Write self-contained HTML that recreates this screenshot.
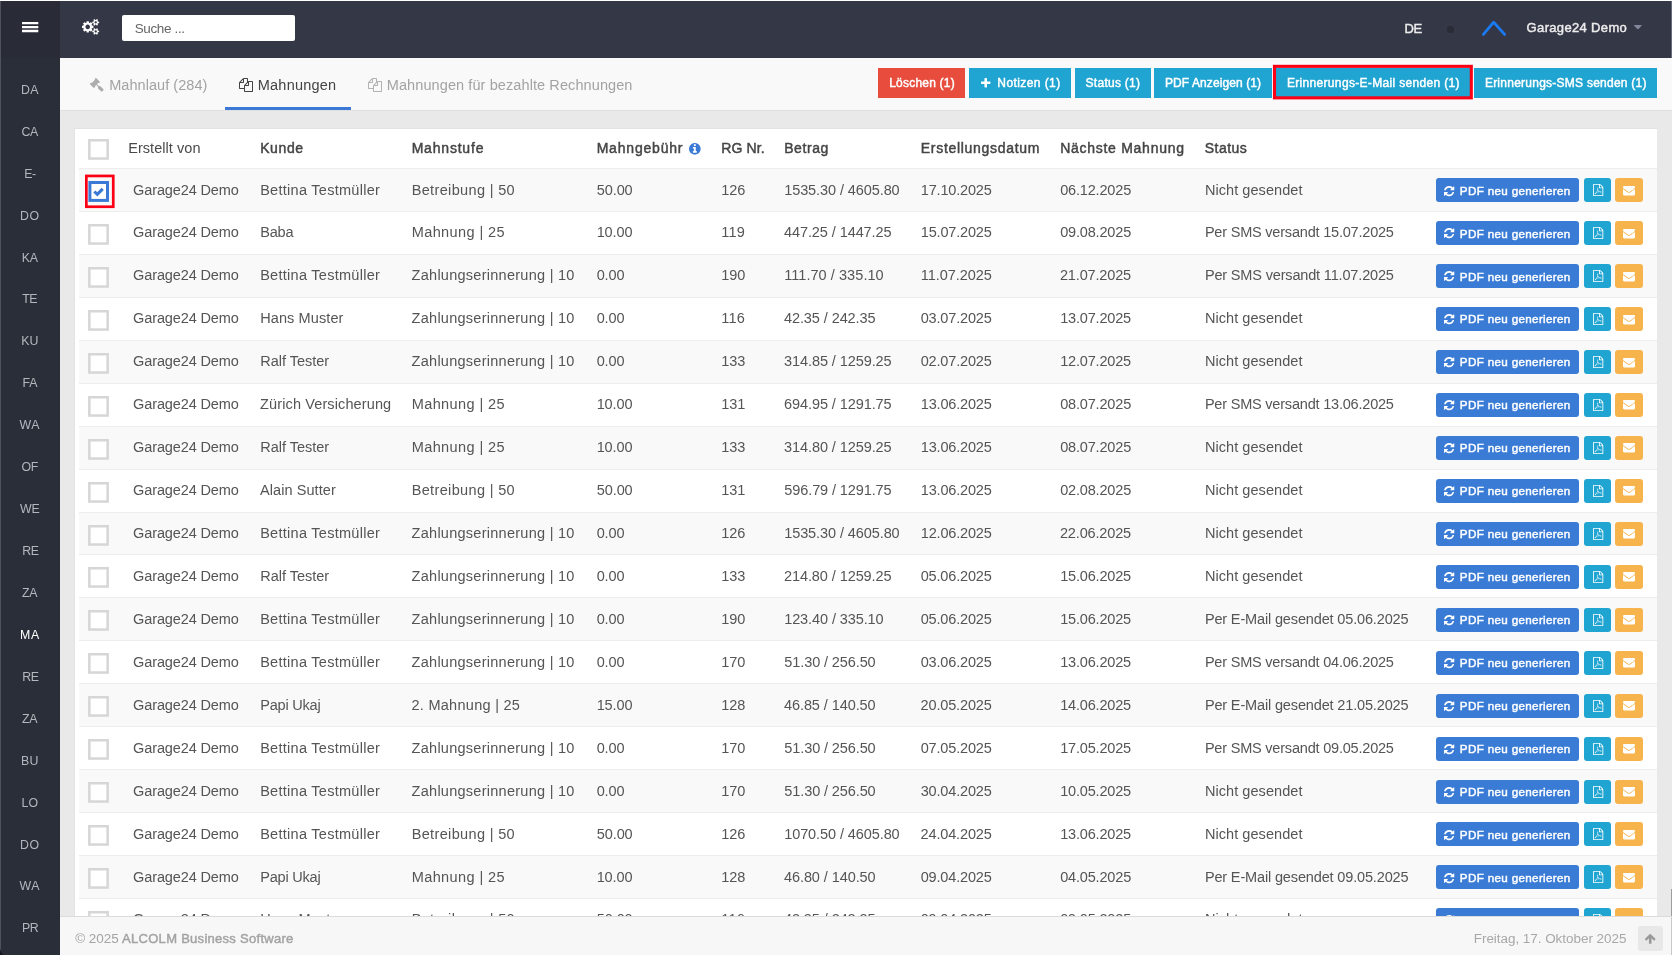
<!DOCTYPE html>
<html lang="de"><head><meta charset="utf-8"><title>Mahnungen</title>
<style>
html,body{margin:0;padding:0}
body{width:1672px;height:955px;overflow:hidden;position:relative;background:#e9e9e9;font-family:"Liberation Sans",sans-serif}
#app{position:absolute;left:0;top:0;width:1672px;height:955px;overflow:hidden;will-change:transform}
.b{position:absolute;box-sizing:content-box}
.t{position:absolute;white-space:pre;line-height:20px}
.i{position:absolute;display:block;overflow:visible}
</style></head><body><div id="app">
<div class="b" style="left:0px;top:0px;width:1672px;height:1px;background:#fff;"></div>
<div class="b" style="left:0px;top:1px;width:1px;height:954px;background:#4f515c;"></div>
<div class="b" style="left:1px;top:1px;width:59px;height:954px;background:#2a2e38;"></div>
<div class="b" style="left:1px;top:1px;width:59px;height:57px;background:#292c36;"></div>
<div class="b" style="left:60px;top:1px;width:1612px;height:57px;background:#343746;"></div>
<div class="b" style="left:1671px;top:1px;width:1px;height:57px;background:#686b7a;"></div>
<svg class="i" style="left:20px;top:20px" width="20" height="14" viewBox="0 0 20 14"><path d="M2 1.9h16.3v2.35H2zM2 5.9h16.3v2.35H2zM2 9.85h16.3v2.35H2z" fill="#fff"/></svg>
<svg class="i" style="left:82.00px;top:19.30px" width="17.14" height="15.72" viewBox="0 -1520 1920 1761"><path fill="#fff" transform="scale(1,-1)" d="M821.0 459.0Q896 534 896.0 640.0Q896 746 821.0 821.0Q746 896 640.0 896.0Q534 896 459.0 821.0Q384 746 384.0 640.0Q384 534 459.0 459.0Q534 384 640.0 384.0Q746 384 821.0 459.0ZM1664 128Q1664 180 1626.0 218.0Q1588 256 1536.0 256.0Q1484 256 1446.0 218.0Q1408 180 1408 128Q1408 75 1445.5 37.5Q1483 0 1536.0 0.0Q1589 0 1626.5 37.5Q1664 75 1664 128ZM1664 1152Q1664 1204 1626.0 1242.0Q1588 1280 1536.0 1280.0Q1484 1280 1446.0 1242.0Q1408 1204 1408 1152Q1408 1099 1445.5 1061.5Q1483 1024 1536.0 1024.0Q1589 1024 1626.5 1061.5Q1664 1099 1664 1152ZM1280 731V546Q1280 536 1273.0 526.5Q1266 517 1257 516L1102 492Q1091 457 1070 416Q1104 368 1160 301Q1167 290 1167 281Q1167 269 1160 262Q1137 232 1077.5 172.5Q1018 113 999 113Q988 113 978 120L863 210Q826 191 786 179Q775 71 763 24Q756 0 733 0H547Q536 0 527.0 7.5Q518 15 517 25L494 178Q460 188 419 209L301 120Q294 113 281 113Q270 113 260 121Q116 254 116 281Q116 290 123 300Q133 314 164.0 353.0Q195 392 211 414Q188 458 176 496L24 520Q14 521 7.0 529.5Q0 538 0 549V734Q0 744 7.0 753.5Q14 763 23 764L178 788Q189 823 210 864Q176 912 120 979Q113 990 113 999Q113 1011 120 1019Q142 1049 202.0 1108.0Q262 1167 281 1167Q292 1167 302 1160L417 1070Q451 1088 494 1102Q505 1210 517 1256Q524 1280 547 1280H733Q744 1280 753.0 1272.5Q762 1265 763 1255L786 1102Q820 1092 861 1071L979 1160Q987 1167 999 1167Q1010 1167 1020 1159Q1164 1026 1164 999Q1164 991 1157 980Q1145 964 1115.0 926.0Q1085 888 1070 866Q1093 818 1104 784L1256 761Q1266 759 1273.0 750.5Q1280 742 1280 731ZM1920 198V58Q1920 42 1771 27Q1759 0 1741 -25Q1792 -138 1792 -163Q1792 -167 1788 -170Q1666 -241 1664 -241Q1656 -241 1618.0 -194.0Q1580 -147 1566 -126Q1546 -128 1536.0 -128.0Q1526 -128 1506 -126Q1492 -147 1454.0 -194.0Q1416 -241 1408 -241Q1406 -241 1284 -170Q1280 -167 1280 -163Q1280 -138 1331 -25Q1313 0 1301 27Q1152 42 1152 58V198Q1152 214 1301 229Q1314 258 1331 281Q1280 394 1280 419Q1280 423 1284 426Q1288 428 1319.0 446.0Q1350 464 1378.0 480.0Q1406 496 1408 496Q1416 496 1454.0 449.5Q1492 403 1506 382Q1526 384 1536.0 384.0Q1546 384 1566 382Q1617 453 1658 494L1664 496Q1668 496 1788 426Q1792 423 1792 419Q1792 394 1741 281Q1758 258 1771 229Q1920 214 1920 198ZM1920 1222V1082Q1920 1066 1771 1051Q1759 1024 1741 999Q1792 886 1792 861Q1792 857 1788 854Q1666 783 1664 783Q1656 783 1618.0 830.0Q1580 877 1566 898Q1546 896 1536.0 896.0Q1526 896 1506 898Q1492 877 1454.0 830.0Q1416 783 1408 783Q1406 783 1284 854Q1280 857 1280 861Q1280 886 1331 999Q1313 1024 1301 1051Q1152 1066 1152 1082V1222Q1152 1238 1301 1253Q1314 1282 1331 1305Q1280 1418 1280 1443Q1280 1447 1284 1450Q1288 1452 1319.0 1470.0Q1350 1488 1378.0 1504.0Q1406 1520 1408 1520Q1416 1520 1454.0 1473.5Q1492 1427 1506 1406Q1526 1408 1536.0 1408.0Q1546 1408 1566 1406Q1617 1477 1658 1518L1664 1520Q1668 1520 1788 1450Q1792 1447 1792 1443Q1792 1418 1741 1305Q1758 1282 1771 1253Q1920 1238 1920 1222Z"/></svg>
<div class="b" style="left:122px;top:15px;width:173px;height:26px;background:#fff;border-radius:2px;"></div>
<span class="t " style="left:134.66px;top:19.00px;font-size:13.49px;color:#666;letter-spacing:-0.349px;">Suche ...</span>
<span class="t " style="left:1404.46px;top:19.00px;font-size:13.0px;color:#ececec;letter-spacing:-0.450px;-webkit-text-stroke:0.45px #ececec;">DE</span>
<div class="b" style="left:1446.7px;top:25.5px;width:7px;height:7px;border-radius:50%;background:#292b36"></div>
<svg class="i" style="left:1478px;top:17px" width="32" height="22" viewBox="0 0 32 22"><path d="M5.4 17.4 L15.7 5.2 L26.6 17.4" fill="none" stroke="#1a7af3" stroke-width="2.8" stroke-linecap="round" stroke-linejoin="round"/></svg>
<span class="t " style="left:1526.61px;top:18.00px;font-size:13.0px;color:#ececec;letter-spacing:0.340px;-webkit-text-stroke:0.45px #ececec;">Garage24 Demo</span>
<svg class="i" style="left:1634.00px;top:25.00px" width="7.77" height="4.37" viewBox="0.0 -896 1024.0 576.0"><path fill="#83869a" transform="scale(1,-1)" d="M1005 787 557 339Q538 320 512.0 320.0Q486 320 467 339L19 787Q0 806 0.0 832.0Q0 858 19.0 877.0Q38 896 64 896H960Q986 896 1005.0 877.0Q1024 858 1024.0 832.0Q1024 806 1005 787Z"/></svg>
<span class="t " style="left:21.03px;top:80.00px;font-size:12.35px;color:#b4b7be;letter-spacing:0.250px;">DA</span>
<span class="t " style="left:21.56px;top:122.00px;font-size:12.35px;color:#b4b7be;letter-spacing:-0.367px;">CA</span>
<span class="t " style="left:24.15px;top:164.00px;font-size:12.35px;color:#b4b7be;letter-spacing:-0.450px;">E-</span>
<span class="t " style="left:20.09px;top:206.00px;font-size:12.35px;color:#b4b7be;letter-spacing:0.516px;">DO</span>
<span class="t " style="left:21.77px;top:248.00px;font-size:12.35px;color:#b4b7be;letter-spacing:-0.141px;">KA</span>
<span class="t " style="left:22.24px;top:289.00px;font-size:12.35px;color:#b4b7be;letter-spacing:-0.450px;">TE</span>
<span class="t " style="left:21.14px;top:331.00px;font-size:12.35px;color:#b4b7be;letter-spacing:0.141px;">KU</span>
<span class="t " style="left:22.39px;top:373.00px;font-size:12.35px;color:#b4b7be;letter-spacing:-0.078px;">FA</span>
<span class="t " style="left:19.60px;top:415.00px;font-size:12.35px;color:#b4b7be;letter-spacing:0.398px;">WA</span>
<span class="t " style="left:21.39px;top:457.00px;font-size:12.35px;color:#b4b7be;letter-spacing:-0.164px;">OF</span>
<span class="t " style="left:20.10px;top:499.00px;font-size:12.35px;color:#b4b7be;letter-spacing:-0.328px;">WE</span>
<span class="t " style="left:22.24px;top:541.00px;font-size:12.35px;color:#b4b7be;letter-spacing:-0.450px;">RE</span>
<span class="t " style="left:21.89px;top:583.00px;font-size:12.35px;color:#b4b7be;letter-spacing:-0.055px;">ZA</span>
<span class="t " style="left:19.90px;top:625.00px;font-size:12.35px;color:#fff;letter-spacing:0.703px;">MA</span>
<span class="t " style="left:22.24px;top:667.00px;font-size:12.35px;color:#b4b7be;letter-spacing:-0.450px;">RE</span>
<span class="t " style="left:21.89px;top:709.00px;font-size:12.35px;color:#b4b7be;letter-spacing:-0.055px;">ZA</span>
<span class="t " style="left:20.93px;top:751.00px;font-size:12.35px;color:#b4b7be;letter-spacing:0.359px;">BU</span>
<span class="t " style="left:21.41px;top:793.00px;font-size:12.35px;color:#b4b7be;letter-spacing:0.219px;">LO</span>
<span class="t " style="left:20.09px;top:835.00px;font-size:12.35px;color:#b4b7be;letter-spacing:0.516px;">DO</span>
<span class="t " style="left:19.60px;top:876.00px;font-size:12.35px;color:#b4b7be;letter-spacing:0.398px;">WA</span>
<span class="t " style="left:21.94px;top:918.00px;font-size:12.35px;color:#b4b7be;letter-spacing:-0.450px;">PR</span>
<div class="b" style="left:60px;top:58px;width:1612px;height:52px;background:#f9f9f9;"></div>
<div class="b" style="left:60px;top:110px;width:1612px;height:1px;background:#e0e0e0;"></div>
<svg class="i" style="left:90.30px;top:78.00px" width="13.52" height="13.52" viewBox="40 -1496 1731 1731"><path fill="#adadad" transform="scale(1,-1)" d="M1771 0Q1771 -53 1734 -90L1627 -198Q1588 -235 1536 -235Q1483 -235 1446 -198L1083 166Q1045 202 1045 256Q1045 309 1088 352L832 608L706 482Q692 468 672.0 468.0Q652 468 638 482Q640 480 650.5 470.0Q661 460 663.0 457.0Q665 454 673.0 445.5Q681 437 683.0 432.0Q685 427 689.0 418.5Q693 410 694.5 402.0Q696 394 696 384Q696 346 668 316Q665 313 651.5 298.0Q638 283 632.5 277.5Q627 272 614.0 261.0Q601 250 592.0 245.5Q583 241 570.0 236.5Q557 232 544 232Q504 232 476 260L68 668Q40 696 40 736Q40 749 44.5 762.0Q49 775 53.5 784.0Q58 793 69.0 806.0Q80 819 85.5 824.5Q91 830 106.0 843.5Q121 857 124 860Q154 888 192 888Q202 888 210.0 886.5Q218 885 226.5 881.0Q235 877 240.0 875.0Q245 873 253.5 865.0Q262 857 265.0 855.0Q268 853 278.0 842.5Q288 832 290 830Q276 844 276.0 864.0Q276 884 290 898L638 1246Q652 1260 672.0 1260.0Q692 1260 706 1246Q704 1248 693.5 1258.0Q683 1268 681.0 1271.0Q679 1274 671.0 1282.5Q663 1291 661.0 1296.0Q659 1301 655.0 1309.5Q651 1318 649.5 1326.0Q648 1334 648 1344Q648 1382 676 1412Q679 1415 692.5 1430.0Q706 1445 711.5 1450.5Q717 1456 730.0 1467.0Q743 1478 752.0 1482.5Q761 1487 774.0 1491.5Q787 1496 800 1496Q840 1496 868 1468L1276 1060Q1304 1032 1304 992Q1304 979 1299.5 966.0Q1295 953 1290.5 944.0Q1286 935 1275.0 922.0Q1264 909 1258.5 903.5Q1253 898 1238.0 884.5Q1223 871 1220 868Q1190 840 1152 840Q1142 840 1134.0 841.5Q1126 843 1117.5 847.0Q1109 851 1104.0 853.0Q1099 855 1090.5 863.0Q1082 871 1079.0 873.0Q1076 875 1066.0 885.5Q1056 896 1054 898Q1068 884 1068.0 864.0Q1068 844 1054 830L928 704L1184 448Q1227 491 1280 491Q1332 491 1371 454L1734 91Q1771 52 1771 0Z"/></svg>
<span class="t " style="left:109.18px;top:75.00px;font-size:14.53px;color:#a3a3a3;letter-spacing:0.045px;">Mahnlauf (284)</span>
<div class="b" style="left:225px;top:107px;width:125.5px;height:3px;background:#3a79d5;"></div>
<svg class="i" style="left:239.00px;top:77.60px" width="14.00" height="14.00" viewBox="0 -1536 1792 1792"><path fill="#444" transform="scale(1,-1)" d="M1696 1152Q1736 1152 1764.0 1124.0Q1792 1096 1792 1056V-160Q1792 -200 1764.0 -228.0Q1736 -256 1696 -256H736Q696 -256 668.0 -228.0Q640 -200 640 -160V128H96Q56 128 28.0 156.0Q0 184 0 224V896Q0 936 20.0 984.0Q40 1032 68 1060L476 1468Q504 1496 552.0 1516.0Q600 1536 640 1536H1056Q1096 1536 1124.0 1508.0Q1152 1480 1152 1440V1112Q1220 1152 1280 1152ZM1152 939 853 640H1152ZM512 1323 213 1024H512ZM708 676 1024 992V1408H640V992Q640 952 612.0 924.0Q584 896 544 896H128V256H640V512Q640 552 660.0 600.0Q680 648 708 676ZM1664 -128V1024H1280V608Q1280 568 1252.0 540.0Q1224 512 1184 512H768V-128Z"/></svg>
<span class="t " style="left:257.78px;top:75.00px;font-size:14.53px;color:#444;letter-spacing:0.214px;">Mahnungen</span>
<svg class="i" style="left:368.00px;top:77.60px" width="14.00" height="14.00" viewBox="0 -1536 1792 1792"><path fill="#b2b2b2" transform="scale(1,-1)" d="M1696 1152Q1736 1152 1764.0 1124.0Q1792 1096 1792 1056V-160Q1792 -200 1764.0 -228.0Q1736 -256 1696 -256H736Q696 -256 668.0 -228.0Q640 -200 640 -160V128H96Q56 128 28.0 156.0Q0 184 0 224V896Q0 936 20.0 984.0Q40 1032 68 1060L476 1468Q504 1496 552.0 1516.0Q600 1536 640 1536H1056Q1096 1536 1124.0 1508.0Q1152 1480 1152 1440V1112Q1220 1152 1280 1152ZM1152 939 853 640H1152ZM512 1323 213 1024H512ZM708 676 1024 992V1408H640V992Q640 952 612.0 924.0Q584 896 544 896H128V256H640V512Q640 552 660.0 600.0Q680 648 708 676ZM1664 -128V1024H1280V608Q1280 568 1252.0 540.0Q1224 512 1184 512H768V-128Z"/></svg>
<span class="t " style="left:386.78px;top:75.00px;font-size:14.53px;color:#a3a3a3;letter-spacing:0.086px;">Mahnungen für bezahlte Rechnungen</span>
<div class="b" style="left:878.25px;top:68px;width:87.0px;height:30px;background:#e74c3c;"></div>
<span class="t " style="left:889.20px;top:73.00px;font-size:12.0px;color:#fff;letter-spacing:0.213px;-webkit-text-stroke:0.45px #fff;">Löschen (1)</span>
<div class="b" style="left:969px;top:68px;width:102.25px;height:30px;background:#20a4d1;"></div>
<div class="b" style="left:1074.5px;top:68px;width:76.25px;height:30px;background:#20a4d1;"></div>
<span class="t " style="left:1085.61px;top:73.00px;font-size:12.0px;color:#fff;letter-spacing:0.256px;-webkit-text-stroke:0.45px #fff;">Status (1)</span>
<div class="b" style="left:1154px;top:68px;width:117.59999999999991px;height:30px;background:#20a4d1;"></div>
<span class="t " style="left:1164.94px;top:73.00px;font-size:12.0px;color:#fff;letter-spacing:0.094px;-webkit-text-stroke:0.45px #fff;">PDF Anzeigen (1)</span>
<div class="b" style="left:1276px;top:68px;width:194px;height:30px;background:#20a4d1;"></div>
<span class="t " style="left:1286.88px;top:73.00px;font-size:12.0px;color:#fff;letter-spacing:0.330px;-webkit-text-stroke:0.45px #fff;">Erinnerungs-E-Mail senden (1)</span>
<svg class="i" style="left:1270px;top:62px" width="206" height="40" viewBox="0 0 206 40"><rect x="4.5" y="4.35" width="196.8" height="31.5" fill="none" stroke="#fb0014" stroke-width="3.1"/></svg>
<div class="b" style="left:1474px;top:68px;width:183px;height:30px;background:#20a4d1;"></div>
<span class="t " style="left:1484.89px;top:73.00px;font-size:12.0px;color:#fff;letter-spacing:0.248px;-webkit-text-stroke:0.45px #fff;">Erinnerungs-SMS senden (1)</span>
<svg class="i" style="left:980.60px;top:78.20px" width="9.43" height="9.43" viewBox="0 -1408 1408 1408"><path fill="#fff" transform="scale(1,-1)" d="M1408 800V608Q1408 568 1380.0 540.0Q1352 512 1312 512H896V96Q896 56 868.0 28.0Q840 0 800 0H608Q568 0 540.0 28.0Q512 56 512 96V512H96Q56 512 28.0 540.0Q0 568 0 608V800Q0 840 28.0 868.0Q56 896 96 896H512V1312Q512 1352 540.0 1380.0Q568 1408 608 1408H800Q840 1408 868.0 1380.0Q896 1352 896 1312V896H1312Q1352 896 1380.0 868.0Q1408 840 1408 800Z"/></svg>
<span class="t " style="left:997.35px;top:73.00px;font-size:12.0px;color:#fff;letter-spacing:0.412px;-webkit-text-stroke:0.45px #fff;">Notizen (1)</span>
<div class="b" style="left:75px;top:129px;width:1582px;height:800px;background:#fff;box-shadow:0 0 0 1px #e3e3e3;"></div>
<svg class="i" style="left:88px;top:139px" width="22" height="22" viewBox="0 0 22 22"><rect x="1.35" y="1.25" width="18.3" height="18.3" fill="#fff" stroke="#d6d6d6" stroke-width="2.5"/></svg>
<span class="t " style="left:128.18px;top:138.00px;font-size:14.53px;color:#4a4a4a;letter-spacing:0.050px;">Erstellt von</span>
<span class="t " style="left:260.17px;top:138.00px;font-size:14.0px;color:#444;letter-spacing:0.606px;-webkit-text-stroke:0.45px #444;">Kunde</span>
<span class="t " style="left:411.67px;top:138.00px;font-size:14.0px;color:#444;letter-spacing:0.800px;-webkit-text-stroke:0.45px #444;">Mahnstufe</span>
<span class="t " style="left:596.67px;top:138.00px;font-size:14.0px;color:#444;letter-spacing:0.800px;-webkit-text-stroke:0.45px #444;">Mahngebühr</span>
<svg class="i" style="left:689.00px;top:143.00px" width="11.66" height="11.66" viewBox="0.0 -1408.0 1536.0 1536.0"><path fill="#3a79d5" transform="scale(1,-1)" d="M1024 160V320Q1024 334 1015.0 343.0Q1006 352 992 352H896V864Q896 878 887.0 887.0Q878 896 864 896H544Q530 896 521.0 887.0Q512 878 512 864V704Q512 690 521.0 681.0Q530 672 544 672H640V352H544Q530 352 521.0 343.0Q512 334 512 320V160Q512 146 521.0 137.0Q530 128 544 128H992Q1006 128 1015.0 137.0Q1024 146 1024 160ZM896 1056V1216Q896 1230 887.0 1239.0Q878 1248 864 1248H672Q658 1248 649.0 1239.0Q640 1230 640 1216V1056Q640 1042 649.0 1033.0Q658 1024 672 1024H864Q878 1024 887.0 1033.0Q896 1042 896 1056ZM1433.0 1025.5Q1536 849 1536.0 640.0Q1536 431 1433.0 254.5Q1330 78 1153.5 -25.0Q977 -128 768.0 -128.0Q559 -128 382.5 -25.0Q206 78 103.0 254.5Q0 431 0.0 640.0Q0 849 103.0 1025.5Q206 1202 382.5 1305.0Q559 1408 768.0 1408.0Q977 1408 1153.5 1305.0Q1330 1202 1433.0 1025.5Z"/></svg>
<span class="t " style="left:721.17px;top:138.00px;font-size:14.0px;color:#444;letter-spacing:0.135px;-webkit-text-stroke:0.45px #444;">RG Nr.</span>
<span class="t " style="left:784.17px;top:138.00px;font-size:14.0px;color:#444;letter-spacing:0.586px;-webkit-text-stroke:0.45px #444;">Betrag</span>
<span class="t " style="left:920.77px;top:138.00px;font-size:14.0px;color:#444;letter-spacing:0.704px;-webkit-text-stroke:0.45px #444;">Erstellungsdatum</span>
<span class="t " style="left:1060.17px;top:138.00px;font-size:14.0px;color:#444;letter-spacing:0.727px;-webkit-text-stroke:0.45px #444;">Nächste Mahnung</span>
<span class="t " style="left:1204.75px;top:138.00px;font-size:14.0px;color:#444;letter-spacing:0.484px;-webkit-text-stroke:0.45px #444;">Status</span>
<div class="b" style="left:79px;top:168.00px;width:1578px;height:43.5375px;background:#f9f9f9;"></div>
<div class="b" style="left:79px;top:168.00px;width:1578px;height:1px;background:#ededed;"></div>
<svg class="i" style="left:84px;top:173px" width="33" height="37" viewBox="0 0 33 37"><rect x="2.35" y="2.95" width="26.9" height="30.8" fill="none" stroke="#fb0014" stroke-width="2.7"/></svg>
<svg class="i" style="left:88px;top:181px" width="22" height="22" viewBox="0 0 22 22"><rect x="1.9" y="1.5" width="17.6" height="17.9" fill="#fff" stroke="#3a79d5" stroke-width="3"/><path d="M6.3 10.5 L9.3 13.4 L14.7 7.8" fill="none" stroke="#3a79d5" stroke-width="3.1"/></svg>
<span class="t " style="left:133.12px;top:180.00px;font-size:14.53px;color:#555;letter-spacing:-0.137px;">Garage24 Demo</span>
<span class="t " style="left:260.18px;top:180.00px;font-size:14.53px;color:#555;letter-spacing:0.271px;">Bettina Testmüller</span>
<span class="t " style="left:411.68px;top:180.00px;font-size:14.53px;color:#555;letter-spacing:0.344px;">Betreibung | 50</span>
<span class="t " style="left:596.83px;top:180.00px;font-size:14.53px;color:#555;letter-spacing:-0.125px;">50.00</span>
<span class="t " style="left:721.18px;top:180.00px;font-size:14.53px;color:#555;letter-spacing:-0.068px;">126</span>
<span class="t " style="left:784.18px;top:180.00px;font-size:14.53px;color:#555;letter-spacing:-0.095px;">1535.30 / 4605.80</span>
<span class="t " style="left:920.78px;top:180.00px;font-size:14.53px;color:#555;letter-spacing:-0.181px;">17.10.2025</span>
<span class="t " style="left:1060.13px;top:180.00px;font-size:14.53px;color:#555;letter-spacing:-0.175px;">06.12.2025</span>
<span class="t " style="left:1204.88px;top:180.00px;font-size:14.53px;color:#555;letter-spacing:0.061px;">Nicht gesendet</span>
<div class="b" style="left:1436px;top:178.40px;width:143px;height:24px;border-radius:3px;background:#3a7bd5"></div>
<svg class="i" style="left:1444.20px;top:185.50px" width="10.29" height="10.29" viewBox="0 -1408 1536 1536"><path fill="#fff" transform="scale(1,-1)" d="M1511 480Q1511 475 1510 473Q1446 205 1242.0 38.5Q1038 -128 764 -128Q618 -128 481.5 -73.0Q345 -18 238 84L109 -45Q90 -64 64.0 -64.0Q38 -64 19.0 -45.0Q0 -26 0 0V448Q0 474 19.0 493.0Q38 512 64 512H512Q538 512 557.0 493.0Q576 474 576.0 448.0Q576 422 557 403L420 266Q491 200 581.0 164.0Q671 128 768 128Q902 128 1018.0 193.0Q1134 258 1204 372Q1215 389 1257 489Q1265 512 1287 512H1479Q1492 512 1501.5 502.5Q1511 493 1511 480ZM1536 1280V832Q1536 806 1517.0 787.0Q1498 768 1472 768H1024Q998 768 979.0 787.0Q960 806 960.0 832.0Q960 858 979 877L1117 1015Q969 1152 768 1152Q634 1152 518.0 1087.0Q402 1022 332 908Q321 891 279 791Q271 768 249 768H50Q37 768 27.5 777.5Q18 787 18 800V807Q83 1075 288.0 1241.5Q493 1408 768 1408Q914 1408 1052.0 1352.5Q1190 1297 1297 1196L1427 1325Q1446 1344 1472.0 1344.0Q1498 1344 1517.0 1325.0Q1536 1306 1536 1280Z"/></svg>
<span class="t " style="left:1459.84px;top:181.00px;font-size:11.65px;color:#fff;letter-spacing:0.333px;-webkit-text-stroke:0.45px #fff;">PDF neu generieren</span>
<div class="b" style="left:1584px;top:178.40px;width:27px;height:24px;border-radius:3px;background:#20a4d1"></div>
<svg class="i" style="left:1592.90px;top:184.40px" width="10.29" height="12.00" viewBox="0 -1536 1536 1792"><path fill="#fff" transform="scale(1,-1)" d="M1468 1156Q1496 1128 1516.0 1080.0Q1536 1032 1536 992V-160Q1536 -200 1508.0 -228.0Q1480 -256 1440 -256H96Q56 -256 28.0 -228.0Q0 -200 0 -160V1440Q0 1480 28.0 1508.0Q56 1536 96 1536H992Q1032 1536 1080.0 1516.0Q1128 1496 1156 1468ZM1024 1400V1024H1400Q1390 1053 1378 1065L1065 1378Q1053 1390 1024 1400ZM1408 -128V896H992Q952 896 924.0 924.0Q896 952 896 992V1408H128V-128ZM894 465Q927 439 978 409Q1037 416 1095 416Q1242 416 1272 367Q1288 345 1274 315Q1274 314 1273.0 313.0Q1272 312 1271 311V310Q1265 272 1200 272Q1152 272 1085.0 292.0Q1018 312 955 345Q734 321 563 262Q410 0 321 0Q306 0 293 7L269 19Q268 20 263 24Q253 34 257 60Q266 100 313.0 151.5Q360 203 445 248Q459 257 468 242Q470 240 470 238Q522 323 577 435Q645 571 681 697Q657 779 650.5 856.5Q644 934 657 984Q668 1024 699 1024H720H721Q744 1024 756 1009Q774 988 765 941Q763 935 761 933Q762 930 762 925V895Q760 772 748 703Q803 539 894 465ZM318 54Q370 78 455 212Q404 172 367.5 128.0Q331 84 318 54ZM716 974Q701 932 714 842Q715 849 721 886Q721 889 728 929Q729 933 732 937Q731 938 731 939Q730 941 730 942Q729 964 717 978Q717 977 716 976ZM592 313Q727 367 876 394Q874 395 863.0 403.5Q852 412 847 417Q771 484 720 593Q693 507 637 396Q607 340 592 313ZM1238 329Q1214 353 1098 353Q1174 325 1222 325Q1236 325 1240 326Q1240 327 1238 329Z"/></svg>
<div class="b" style="left:1614.8px;top:178.40px;width:28.2px;height:24px;border-radius:3px;background:#f8b44c"></div>
<svg class="i" style="left:1622.90px;top:185.80px" width="12.00" height="9.43" viewBox="0 -1280 1792 1408"><path fill="#fff" transform="scale(1,-1)" d="M1792 826V32Q1792 -34 1745.0 -81.0Q1698 -128 1632 -128H160Q94 -128 47.0 -81.0Q0 -34 0 32V826Q44 777 101 739Q463 493 598 394Q655 352 690.5 328.5Q726 305 785.0 280.5Q844 256 895 256H896H897Q948 256 1007.0 280.5Q1066 305 1101.5 328.5Q1137 352 1194 394Q1364 517 1692 739Q1749 778 1792 826ZM1792 1120Q1792 1041 1743.0 969.0Q1694 897 1621 846Q1245 585 1153 521Q1143 514 1110.5 490.5Q1078 467 1056.5 452.5Q1035 438 1004.5 420.0Q974 402 947.0 393.0Q920 384 897 384H896H895Q872 384 845.0 393.0Q818 402 787.5 420.0Q757 438 735.5 452.5Q714 467 681.5 490.5Q649 514 639 521Q548 585 377.0 703.5Q206 822 172 846Q110 888 55.0 961.5Q0 1035 0 1098Q0 1176 41.5 1228.0Q83 1280 160 1280H1632Q1697 1280 1744.5 1233.0Q1792 1186 1792 1120Z"/></svg>
<div class="b" style="left:79px;top:210.94px;width:1578px;height:1px;background:#ededed;"></div>
<svg class="i" style="left:88px;top:223.94px" width="22" height="22" viewBox="0 0 22 22"><rect x="1.35" y="1.25" width="18.3" height="18.3" fill="#fff" stroke="#d6d6d6" stroke-width="2.5"/></svg>
<span class="t " style="left:133.12px;top:222.00px;font-size:14.53px;color:#555;letter-spacing:-0.137px;">Garage24 Demo</span>
<span class="t " style="left:260.18px;top:222.00px;font-size:14.53px;color:#555;letter-spacing:-0.184px;">Baba</span>
<span class="t " style="left:411.68px;top:222.00px;font-size:14.53px;color:#555;letter-spacing:0.400px;">Mahnung | 25</span>
<span class="t " style="left:596.68px;top:222.00px;font-size:14.53px;color:#555;letter-spacing:-0.125px;">10.00</span>
<span class="t " style="left:721.18px;top:222.00px;font-size:14.53px;color:#555;letter-spacing:0.292px;">119</span>
<span class="t " style="left:783.96px;top:222.00px;font-size:14.53px;color:#555;letter-spacing:-0.087px;">447.25 / 1447.25</span>
<span class="t " style="left:920.78px;top:222.00px;font-size:14.53px;color:#555;letter-spacing:-0.181px;">15.07.2025</span>
<span class="t " style="left:1060.13px;top:222.00px;font-size:14.53px;color:#555;letter-spacing:-0.175px;">09.08.2025</span>
<span class="t " style="left:1204.88px;top:222.00px;font-size:14.53px;color:#555;letter-spacing:-0.208px;">Per SMS versandt 15.07.2025</span>
<div class="b" style="left:1436px;top:221.34px;width:143px;height:24px;border-radius:3px;background:#3a7bd5"></div>
<svg class="i" style="left:1444.20px;top:228.44px" width="10.29" height="10.29" viewBox="0 -1408 1536 1536"><path fill="#fff" transform="scale(1,-1)" d="M1511 480Q1511 475 1510 473Q1446 205 1242.0 38.5Q1038 -128 764 -128Q618 -128 481.5 -73.0Q345 -18 238 84L109 -45Q90 -64 64.0 -64.0Q38 -64 19.0 -45.0Q0 -26 0 0V448Q0 474 19.0 493.0Q38 512 64 512H512Q538 512 557.0 493.0Q576 474 576.0 448.0Q576 422 557 403L420 266Q491 200 581.0 164.0Q671 128 768 128Q902 128 1018.0 193.0Q1134 258 1204 372Q1215 389 1257 489Q1265 512 1287 512H1479Q1492 512 1501.5 502.5Q1511 493 1511 480ZM1536 1280V832Q1536 806 1517.0 787.0Q1498 768 1472 768H1024Q998 768 979.0 787.0Q960 806 960.0 832.0Q960 858 979 877L1117 1015Q969 1152 768 1152Q634 1152 518.0 1087.0Q402 1022 332 908Q321 891 279 791Q271 768 249 768H50Q37 768 27.5 777.5Q18 787 18 800V807Q83 1075 288.0 1241.5Q493 1408 768 1408Q914 1408 1052.0 1352.5Q1190 1297 1297 1196L1427 1325Q1446 1344 1472.0 1344.0Q1498 1344 1517.0 1325.0Q1536 1306 1536 1280Z"/></svg>
<span class="t " style="left:1459.84px;top:224.00px;font-size:11.65px;color:#fff;letter-spacing:0.333px;-webkit-text-stroke:0.45px #fff;">PDF neu generieren</span>
<div class="b" style="left:1584px;top:221.34px;width:27px;height:24px;border-radius:3px;background:#20a4d1"></div>
<svg class="i" style="left:1592.90px;top:227.34px" width="10.29" height="12.00" viewBox="0 -1536 1536 1792"><path fill="#fff" transform="scale(1,-1)" d="M1468 1156Q1496 1128 1516.0 1080.0Q1536 1032 1536 992V-160Q1536 -200 1508.0 -228.0Q1480 -256 1440 -256H96Q56 -256 28.0 -228.0Q0 -200 0 -160V1440Q0 1480 28.0 1508.0Q56 1536 96 1536H992Q1032 1536 1080.0 1516.0Q1128 1496 1156 1468ZM1024 1400V1024H1400Q1390 1053 1378 1065L1065 1378Q1053 1390 1024 1400ZM1408 -128V896H992Q952 896 924.0 924.0Q896 952 896 992V1408H128V-128ZM894 465Q927 439 978 409Q1037 416 1095 416Q1242 416 1272 367Q1288 345 1274 315Q1274 314 1273.0 313.0Q1272 312 1271 311V310Q1265 272 1200 272Q1152 272 1085.0 292.0Q1018 312 955 345Q734 321 563 262Q410 0 321 0Q306 0 293 7L269 19Q268 20 263 24Q253 34 257 60Q266 100 313.0 151.5Q360 203 445 248Q459 257 468 242Q470 240 470 238Q522 323 577 435Q645 571 681 697Q657 779 650.5 856.5Q644 934 657 984Q668 1024 699 1024H720H721Q744 1024 756 1009Q774 988 765 941Q763 935 761 933Q762 930 762 925V895Q760 772 748 703Q803 539 894 465ZM318 54Q370 78 455 212Q404 172 367.5 128.0Q331 84 318 54ZM716 974Q701 932 714 842Q715 849 721 886Q721 889 728 929Q729 933 732 937Q731 938 731 939Q730 941 730 942Q729 964 717 978Q717 977 716 976ZM592 313Q727 367 876 394Q874 395 863.0 403.5Q852 412 847 417Q771 484 720 593Q693 507 637 396Q607 340 592 313ZM1238 329Q1214 353 1098 353Q1174 325 1222 325Q1236 325 1240 326Q1240 327 1238 329Z"/></svg>
<div class="b" style="left:1614.8px;top:221.34px;width:28.2px;height:24px;border-radius:3px;background:#f8b44c"></div>
<svg class="i" style="left:1622.90px;top:228.74px" width="12.00" height="9.43" viewBox="0 -1280 1792 1408"><path fill="#fff" transform="scale(1,-1)" d="M1792 826V32Q1792 -34 1745.0 -81.0Q1698 -128 1632 -128H160Q94 -128 47.0 -81.0Q0 -34 0 32V826Q44 777 101 739Q463 493 598 394Q655 352 690.5 328.5Q726 305 785.0 280.5Q844 256 895 256H896H897Q948 256 1007.0 280.5Q1066 305 1101.5 328.5Q1137 352 1194 394Q1364 517 1692 739Q1749 778 1792 826ZM1792 1120Q1792 1041 1743.0 969.0Q1694 897 1621 846Q1245 585 1153 521Q1143 514 1110.5 490.5Q1078 467 1056.5 452.5Q1035 438 1004.5 420.0Q974 402 947.0 393.0Q920 384 897 384H896H895Q872 384 845.0 393.0Q818 402 787.5 420.0Q757 438 735.5 452.5Q714 467 681.5 490.5Q649 514 639 521Q548 585 377.0 703.5Q206 822 172 846Q110 888 55.0 961.5Q0 1035 0 1098Q0 1176 41.5 1228.0Q83 1280 160 1280H1632Q1697 1280 1744.5 1233.0Q1792 1186 1792 1120Z"/></svg>
<div class="b" style="left:79px;top:253.88px;width:1578px;height:43.5375px;background:#f9f9f9;"></div>
<div class="b" style="left:79px;top:253.88px;width:1578px;height:1px;background:#ededed;"></div>
<svg class="i" style="left:88px;top:266.88px" width="22" height="22" viewBox="0 0 22 22"><rect x="1.35" y="1.25" width="18.3" height="18.3" fill="#fff" stroke="#d6d6d6" stroke-width="2.5"/></svg>
<span class="t " style="left:133.12px;top:265.00px;font-size:14.53px;color:#555;letter-spacing:-0.137px;">Garage24 Demo</span>
<span class="t " style="left:260.18px;top:265.00px;font-size:14.53px;color:#555;letter-spacing:0.271px;">Bettina Testmüller</span>
<span class="t " style="left:411.60px;top:265.00px;font-size:14.53px;color:#555;letter-spacing:0.257px;">Zahlungserinnerung | 10</span>
<span class="t " style="left:596.63px;top:265.00px;font-size:14.53px;color:#555;letter-spacing:-0.141px;">0.00</span>
<span class="t " style="left:721.18px;top:265.00px;font-size:14.53px;color:#555;letter-spacing:-0.068px;">190</span>
<span class="t " style="left:784.18px;top:265.00px;font-size:14.53px;color:#555;letter-spacing:0.054px;">111.70 / 335.10</span>
<span class="t " style="left:920.78px;top:265.00px;font-size:14.53px;color:#555;letter-spacing:-0.061px;">11.07.2025</span>
<span class="t " style="left:1059.95px;top:265.00px;font-size:14.53px;color:#555;letter-spacing:-0.155px;">21.07.2025</span>
<span class="t " style="left:1204.88px;top:265.00px;font-size:14.53px;color:#555;letter-spacing:-0.167px;">Per SMS versandt 11.07.2025</span>
<div class="b" style="left:1436px;top:264.27px;width:143px;height:24px;border-radius:3px;background:#3a7bd5"></div>
<svg class="i" style="left:1444.20px;top:271.38px" width="10.29" height="10.29" viewBox="0 -1408 1536 1536"><path fill="#fff" transform="scale(1,-1)" d="M1511 480Q1511 475 1510 473Q1446 205 1242.0 38.5Q1038 -128 764 -128Q618 -128 481.5 -73.0Q345 -18 238 84L109 -45Q90 -64 64.0 -64.0Q38 -64 19.0 -45.0Q0 -26 0 0V448Q0 474 19.0 493.0Q38 512 64 512H512Q538 512 557.0 493.0Q576 474 576.0 448.0Q576 422 557 403L420 266Q491 200 581.0 164.0Q671 128 768 128Q902 128 1018.0 193.0Q1134 258 1204 372Q1215 389 1257 489Q1265 512 1287 512H1479Q1492 512 1501.5 502.5Q1511 493 1511 480ZM1536 1280V832Q1536 806 1517.0 787.0Q1498 768 1472 768H1024Q998 768 979.0 787.0Q960 806 960.0 832.0Q960 858 979 877L1117 1015Q969 1152 768 1152Q634 1152 518.0 1087.0Q402 1022 332 908Q321 891 279 791Q271 768 249 768H50Q37 768 27.5 777.5Q18 787 18 800V807Q83 1075 288.0 1241.5Q493 1408 768 1408Q914 1408 1052.0 1352.5Q1190 1297 1297 1196L1427 1325Q1446 1344 1472.0 1344.0Q1498 1344 1517.0 1325.0Q1536 1306 1536 1280Z"/></svg>
<span class="t " style="left:1459.84px;top:267.00px;font-size:11.65px;color:#fff;letter-spacing:0.333px;-webkit-text-stroke:0.45px #fff;">PDF neu generieren</span>
<div class="b" style="left:1584px;top:264.27px;width:27px;height:24px;border-radius:3px;background:#20a4d1"></div>
<svg class="i" style="left:1592.90px;top:270.27px" width="10.29" height="12.00" viewBox="0 -1536 1536 1792"><path fill="#fff" transform="scale(1,-1)" d="M1468 1156Q1496 1128 1516.0 1080.0Q1536 1032 1536 992V-160Q1536 -200 1508.0 -228.0Q1480 -256 1440 -256H96Q56 -256 28.0 -228.0Q0 -200 0 -160V1440Q0 1480 28.0 1508.0Q56 1536 96 1536H992Q1032 1536 1080.0 1516.0Q1128 1496 1156 1468ZM1024 1400V1024H1400Q1390 1053 1378 1065L1065 1378Q1053 1390 1024 1400ZM1408 -128V896H992Q952 896 924.0 924.0Q896 952 896 992V1408H128V-128ZM894 465Q927 439 978 409Q1037 416 1095 416Q1242 416 1272 367Q1288 345 1274 315Q1274 314 1273.0 313.0Q1272 312 1271 311V310Q1265 272 1200 272Q1152 272 1085.0 292.0Q1018 312 955 345Q734 321 563 262Q410 0 321 0Q306 0 293 7L269 19Q268 20 263 24Q253 34 257 60Q266 100 313.0 151.5Q360 203 445 248Q459 257 468 242Q470 240 470 238Q522 323 577 435Q645 571 681 697Q657 779 650.5 856.5Q644 934 657 984Q668 1024 699 1024H720H721Q744 1024 756 1009Q774 988 765 941Q763 935 761 933Q762 930 762 925V895Q760 772 748 703Q803 539 894 465ZM318 54Q370 78 455 212Q404 172 367.5 128.0Q331 84 318 54ZM716 974Q701 932 714 842Q715 849 721 886Q721 889 728 929Q729 933 732 937Q731 938 731 939Q730 941 730 942Q729 964 717 978Q717 977 716 976ZM592 313Q727 367 876 394Q874 395 863.0 403.5Q852 412 847 417Q771 484 720 593Q693 507 637 396Q607 340 592 313ZM1238 329Q1214 353 1098 353Q1174 325 1222 325Q1236 325 1240 326Q1240 327 1238 329Z"/></svg>
<div class="b" style="left:1614.8px;top:264.27px;width:28.2px;height:24px;border-radius:3px;background:#f8b44c"></div>
<svg class="i" style="left:1622.90px;top:271.67px" width="12.00" height="9.43" viewBox="0 -1280 1792 1408"><path fill="#fff" transform="scale(1,-1)" d="M1792 826V32Q1792 -34 1745.0 -81.0Q1698 -128 1632 -128H160Q94 -128 47.0 -81.0Q0 -34 0 32V826Q44 777 101 739Q463 493 598 394Q655 352 690.5 328.5Q726 305 785.0 280.5Q844 256 895 256H896H897Q948 256 1007.0 280.5Q1066 305 1101.5 328.5Q1137 352 1194 394Q1364 517 1692 739Q1749 778 1792 826ZM1792 1120Q1792 1041 1743.0 969.0Q1694 897 1621 846Q1245 585 1153 521Q1143 514 1110.5 490.5Q1078 467 1056.5 452.5Q1035 438 1004.5 420.0Q974 402 947.0 393.0Q920 384 897 384H896H895Q872 384 845.0 393.0Q818 402 787.5 420.0Q757 438 735.5 452.5Q714 467 681.5 490.5Q649 514 639 521Q548 585 377.0 703.5Q206 822 172 846Q110 888 55.0 961.5Q0 1035 0 1098Q0 1176 41.5 1228.0Q83 1280 160 1280H1632Q1697 1280 1744.5 1233.0Q1792 1186 1792 1120Z"/></svg>
<div class="b" style="left:79px;top:296.81px;width:1578px;height:1px;background:#ededed;"></div>
<svg class="i" style="left:88px;top:309.81px" width="22" height="22" viewBox="0 0 22 22"><rect x="1.35" y="1.25" width="18.3" height="18.3" fill="#fff" stroke="#d6d6d6" stroke-width="2.5"/></svg>
<span class="t " style="left:133.12px;top:308.00px;font-size:14.53px;color:#555;letter-spacing:-0.137px;">Garage24 Demo</span>
<span class="t " style="left:260.18px;top:308.00px;font-size:14.53px;color:#555;letter-spacing:0.100px;">Hans Muster</span>
<span class="t " style="left:411.60px;top:308.00px;font-size:14.53px;color:#555;letter-spacing:0.257px;">Zahlungserinnerung | 10</span>
<span class="t " style="left:596.63px;top:308.00px;font-size:14.53px;color:#555;letter-spacing:-0.141px;">0.00</span>
<span class="t " style="left:721.18px;top:308.00px;font-size:14.53px;color:#555;letter-spacing:0.292px;">116</span>
<span class="t " style="left:783.96px;top:308.00px;font-size:14.53px;color:#555;letter-spacing:-0.090px;">42.35 / 242.35</span>
<span class="t " style="left:920.73px;top:308.00px;font-size:14.53px;color:#555;letter-spacing:-0.175px;">03.07.2025</span>
<span class="t " style="left:1060.18px;top:308.00px;font-size:14.53px;color:#555;letter-spacing:-0.181px;">13.07.2025</span>
<span class="t " style="left:1204.88px;top:308.00px;font-size:14.53px;color:#555;letter-spacing:0.061px;">Nicht gesendet</span>
<div class="b" style="left:1436px;top:307.21px;width:143px;height:24px;border-radius:3px;background:#3a7bd5"></div>
<svg class="i" style="left:1444.20px;top:314.31px" width="10.29" height="10.29" viewBox="0 -1408 1536 1536"><path fill="#fff" transform="scale(1,-1)" d="M1511 480Q1511 475 1510 473Q1446 205 1242.0 38.5Q1038 -128 764 -128Q618 -128 481.5 -73.0Q345 -18 238 84L109 -45Q90 -64 64.0 -64.0Q38 -64 19.0 -45.0Q0 -26 0 0V448Q0 474 19.0 493.0Q38 512 64 512H512Q538 512 557.0 493.0Q576 474 576.0 448.0Q576 422 557 403L420 266Q491 200 581.0 164.0Q671 128 768 128Q902 128 1018.0 193.0Q1134 258 1204 372Q1215 389 1257 489Q1265 512 1287 512H1479Q1492 512 1501.5 502.5Q1511 493 1511 480ZM1536 1280V832Q1536 806 1517.0 787.0Q1498 768 1472 768H1024Q998 768 979.0 787.0Q960 806 960.0 832.0Q960 858 979 877L1117 1015Q969 1152 768 1152Q634 1152 518.0 1087.0Q402 1022 332 908Q321 891 279 791Q271 768 249 768H50Q37 768 27.5 777.5Q18 787 18 800V807Q83 1075 288.0 1241.5Q493 1408 768 1408Q914 1408 1052.0 1352.5Q1190 1297 1297 1196L1427 1325Q1446 1344 1472.0 1344.0Q1498 1344 1517.0 1325.0Q1536 1306 1536 1280Z"/></svg>
<span class="t " style="left:1459.84px;top:309.00px;font-size:11.65px;color:#fff;letter-spacing:0.333px;-webkit-text-stroke:0.45px #fff;">PDF neu generieren</span>
<div class="b" style="left:1584px;top:307.21px;width:27px;height:24px;border-radius:3px;background:#20a4d1"></div>
<svg class="i" style="left:1592.90px;top:313.21px" width="10.29" height="12.00" viewBox="0 -1536 1536 1792"><path fill="#fff" transform="scale(1,-1)" d="M1468 1156Q1496 1128 1516.0 1080.0Q1536 1032 1536 992V-160Q1536 -200 1508.0 -228.0Q1480 -256 1440 -256H96Q56 -256 28.0 -228.0Q0 -200 0 -160V1440Q0 1480 28.0 1508.0Q56 1536 96 1536H992Q1032 1536 1080.0 1516.0Q1128 1496 1156 1468ZM1024 1400V1024H1400Q1390 1053 1378 1065L1065 1378Q1053 1390 1024 1400ZM1408 -128V896H992Q952 896 924.0 924.0Q896 952 896 992V1408H128V-128ZM894 465Q927 439 978 409Q1037 416 1095 416Q1242 416 1272 367Q1288 345 1274 315Q1274 314 1273.0 313.0Q1272 312 1271 311V310Q1265 272 1200 272Q1152 272 1085.0 292.0Q1018 312 955 345Q734 321 563 262Q410 0 321 0Q306 0 293 7L269 19Q268 20 263 24Q253 34 257 60Q266 100 313.0 151.5Q360 203 445 248Q459 257 468 242Q470 240 470 238Q522 323 577 435Q645 571 681 697Q657 779 650.5 856.5Q644 934 657 984Q668 1024 699 1024H720H721Q744 1024 756 1009Q774 988 765 941Q763 935 761 933Q762 930 762 925V895Q760 772 748 703Q803 539 894 465ZM318 54Q370 78 455 212Q404 172 367.5 128.0Q331 84 318 54ZM716 974Q701 932 714 842Q715 849 721 886Q721 889 728 929Q729 933 732 937Q731 938 731 939Q730 941 730 942Q729 964 717 978Q717 977 716 976ZM592 313Q727 367 876 394Q874 395 863.0 403.5Q852 412 847 417Q771 484 720 593Q693 507 637 396Q607 340 592 313ZM1238 329Q1214 353 1098 353Q1174 325 1222 325Q1236 325 1240 326Q1240 327 1238 329Z"/></svg>
<div class="b" style="left:1614.8px;top:307.21px;width:28.2px;height:24px;border-radius:3px;background:#f8b44c"></div>
<svg class="i" style="left:1622.90px;top:314.61px" width="12.00" height="9.43" viewBox="0 -1280 1792 1408"><path fill="#fff" transform="scale(1,-1)" d="M1792 826V32Q1792 -34 1745.0 -81.0Q1698 -128 1632 -128H160Q94 -128 47.0 -81.0Q0 -34 0 32V826Q44 777 101 739Q463 493 598 394Q655 352 690.5 328.5Q726 305 785.0 280.5Q844 256 895 256H896H897Q948 256 1007.0 280.5Q1066 305 1101.5 328.5Q1137 352 1194 394Q1364 517 1692 739Q1749 778 1792 826ZM1792 1120Q1792 1041 1743.0 969.0Q1694 897 1621 846Q1245 585 1153 521Q1143 514 1110.5 490.5Q1078 467 1056.5 452.5Q1035 438 1004.5 420.0Q974 402 947.0 393.0Q920 384 897 384H896H895Q872 384 845.0 393.0Q818 402 787.5 420.0Q757 438 735.5 452.5Q714 467 681.5 490.5Q649 514 639 521Q548 585 377.0 703.5Q206 822 172 846Q110 888 55.0 961.5Q0 1035 0 1098Q0 1176 41.5 1228.0Q83 1280 160 1280H1632Q1697 1280 1744.5 1233.0Q1792 1186 1792 1120Z"/></svg>
<div class="b" style="left:79px;top:339.75px;width:1578px;height:43.5375px;background:#f9f9f9;"></div>
<div class="b" style="left:79px;top:339.75px;width:1578px;height:1px;background:#ededed;"></div>
<svg class="i" style="left:88px;top:352.75px" width="22" height="22" viewBox="0 0 22 22"><rect x="1.35" y="1.25" width="18.3" height="18.3" fill="#fff" stroke="#d6d6d6" stroke-width="2.5"/></svg>
<span class="t " style="left:133.12px;top:351.00px;font-size:14.53px;color:#555;letter-spacing:-0.137px;">Garage24 Demo</span>
<span class="t " style="left:260.18px;top:351.00px;font-size:14.53px;color:#555;letter-spacing:-0.014px;">Ralf Tester</span>
<span class="t " style="left:411.60px;top:351.00px;font-size:14.53px;color:#555;letter-spacing:0.257px;">Zahlungserinnerung | 10</span>
<span class="t " style="left:596.63px;top:351.00px;font-size:14.53px;color:#555;letter-spacing:-0.141px;">0.00</span>
<span class="t " style="left:721.18px;top:351.00px;font-size:14.53px;color:#555;letter-spacing:-0.068px;">133</span>
<span class="t " style="left:784.09px;top:351.00px;font-size:14.53px;color:#555;letter-spacing:-0.095px;">314.85 / 1259.25</span>
<span class="t " style="left:920.73px;top:351.00px;font-size:14.53px;color:#555;letter-spacing:-0.175px;">02.07.2025</span>
<span class="t " style="left:1060.18px;top:351.00px;font-size:14.53px;color:#555;letter-spacing:-0.181px;">12.07.2025</span>
<span class="t " style="left:1204.88px;top:351.00px;font-size:14.53px;color:#555;letter-spacing:0.061px;">Nicht gesendet</span>
<div class="b" style="left:1436px;top:350.15px;width:143px;height:24px;border-radius:3px;background:#3a7bd5"></div>
<svg class="i" style="left:1444.20px;top:357.25px" width="10.29" height="10.29" viewBox="0 -1408 1536 1536"><path fill="#fff" transform="scale(1,-1)" d="M1511 480Q1511 475 1510 473Q1446 205 1242.0 38.5Q1038 -128 764 -128Q618 -128 481.5 -73.0Q345 -18 238 84L109 -45Q90 -64 64.0 -64.0Q38 -64 19.0 -45.0Q0 -26 0 0V448Q0 474 19.0 493.0Q38 512 64 512H512Q538 512 557.0 493.0Q576 474 576.0 448.0Q576 422 557 403L420 266Q491 200 581.0 164.0Q671 128 768 128Q902 128 1018.0 193.0Q1134 258 1204 372Q1215 389 1257 489Q1265 512 1287 512H1479Q1492 512 1501.5 502.5Q1511 493 1511 480ZM1536 1280V832Q1536 806 1517.0 787.0Q1498 768 1472 768H1024Q998 768 979.0 787.0Q960 806 960.0 832.0Q960 858 979 877L1117 1015Q969 1152 768 1152Q634 1152 518.0 1087.0Q402 1022 332 908Q321 891 279 791Q271 768 249 768H50Q37 768 27.5 777.5Q18 787 18 800V807Q83 1075 288.0 1241.5Q493 1408 768 1408Q914 1408 1052.0 1352.5Q1190 1297 1297 1196L1427 1325Q1446 1344 1472.0 1344.0Q1498 1344 1517.0 1325.0Q1536 1306 1536 1280Z"/></svg>
<span class="t " style="left:1459.84px;top:352.00px;font-size:11.65px;color:#fff;letter-spacing:0.333px;-webkit-text-stroke:0.45px #fff;">PDF neu generieren</span>
<div class="b" style="left:1584px;top:350.15px;width:27px;height:24px;border-radius:3px;background:#20a4d1"></div>
<svg class="i" style="left:1592.90px;top:356.15px" width="10.29" height="12.00" viewBox="0 -1536 1536 1792"><path fill="#fff" transform="scale(1,-1)" d="M1468 1156Q1496 1128 1516.0 1080.0Q1536 1032 1536 992V-160Q1536 -200 1508.0 -228.0Q1480 -256 1440 -256H96Q56 -256 28.0 -228.0Q0 -200 0 -160V1440Q0 1480 28.0 1508.0Q56 1536 96 1536H992Q1032 1536 1080.0 1516.0Q1128 1496 1156 1468ZM1024 1400V1024H1400Q1390 1053 1378 1065L1065 1378Q1053 1390 1024 1400ZM1408 -128V896H992Q952 896 924.0 924.0Q896 952 896 992V1408H128V-128ZM894 465Q927 439 978 409Q1037 416 1095 416Q1242 416 1272 367Q1288 345 1274 315Q1274 314 1273.0 313.0Q1272 312 1271 311V310Q1265 272 1200 272Q1152 272 1085.0 292.0Q1018 312 955 345Q734 321 563 262Q410 0 321 0Q306 0 293 7L269 19Q268 20 263 24Q253 34 257 60Q266 100 313.0 151.5Q360 203 445 248Q459 257 468 242Q470 240 470 238Q522 323 577 435Q645 571 681 697Q657 779 650.5 856.5Q644 934 657 984Q668 1024 699 1024H720H721Q744 1024 756 1009Q774 988 765 941Q763 935 761 933Q762 930 762 925V895Q760 772 748 703Q803 539 894 465ZM318 54Q370 78 455 212Q404 172 367.5 128.0Q331 84 318 54ZM716 974Q701 932 714 842Q715 849 721 886Q721 889 728 929Q729 933 732 937Q731 938 731 939Q730 941 730 942Q729 964 717 978Q717 977 716 976ZM592 313Q727 367 876 394Q874 395 863.0 403.5Q852 412 847 417Q771 484 720 593Q693 507 637 396Q607 340 592 313ZM1238 329Q1214 353 1098 353Q1174 325 1222 325Q1236 325 1240 326Q1240 327 1238 329Z"/></svg>
<div class="b" style="left:1614.8px;top:350.15px;width:28.2px;height:24px;border-radius:3px;background:#f8b44c"></div>
<svg class="i" style="left:1622.90px;top:357.55px" width="12.00" height="9.43" viewBox="0 -1280 1792 1408"><path fill="#fff" transform="scale(1,-1)" d="M1792 826V32Q1792 -34 1745.0 -81.0Q1698 -128 1632 -128H160Q94 -128 47.0 -81.0Q0 -34 0 32V826Q44 777 101 739Q463 493 598 394Q655 352 690.5 328.5Q726 305 785.0 280.5Q844 256 895 256H896H897Q948 256 1007.0 280.5Q1066 305 1101.5 328.5Q1137 352 1194 394Q1364 517 1692 739Q1749 778 1792 826ZM1792 1120Q1792 1041 1743.0 969.0Q1694 897 1621 846Q1245 585 1153 521Q1143 514 1110.5 490.5Q1078 467 1056.5 452.5Q1035 438 1004.5 420.0Q974 402 947.0 393.0Q920 384 897 384H896H895Q872 384 845.0 393.0Q818 402 787.5 420.0Q757 438 735.5 452.5Q714 467 681.5 490.5Q649 514 639 521Q548 585 377.0 703.5Q206 822 172 846Q110 888 55.0 961.5Q0 1035 0 1098Q0 1176 41.5 1228.0Q83 1280 160 1280H1632Q1697 1280 1744.5 1233.0Q1792 1186 1792 1120Z"/></svg>
<div class="b" style="left:79px;top:382.69px;width:1578px;height:1px;background:#ededed;"></div>
<svg class="i" style="left:88px;top:395.69px" width="22" height="22" viewBox="0 0 22 22"><rect x="1.35" y="1.25" width="18.3" height="18.3" fill="#fff" stroke="#d6d6d6" stroke-width="2.5"/></svg>
<span class="t " style="left:133.12px;top:394.00px;font-size:14.53px;color:#555;letter-spacing:-0.137px;">Garage24 Demo</span>
<span class="t " style="left:260.10px;top:394.00px;font-size:14.53px;color:#555;letter-spacing:0.110px;">Zürich Versicherung</span>
<span class="t " style="left:411.68px;top:394.00px;font-size:14.53px;color:#555;letter-spacing:0.400px;">Mahnung | 25</span>
<span class="t " style="left:596.68px;top:394.00px;font-size:14.53px;color:#555;letter-spacing:-0.125px;">10.00</span>
<span class="t " style="left:721.18px;top:394.00px;font-size:14.53px;color:#555;letter-spacing:-0.068px;">131</span>
<span class="t " style="left:784.06px;top:394.00px;font-size:14.53px;color:#555;letter-spacing:-0.093px;">694.95 / 1291.75</span>
<span class="t " style="left:920.78px;top:394.00px;font-size:14.53px;color:#555;letter-spacing:-0.181px;">13.06.2025</span>
<span class="t " style="left:1060.13px;top:394.00px;font-size:14.53px;color:#555;letter-spacing:-0.175px;">08.07.2025</span>
<span class="t " style="left:1204.88px;top:394.00px;font-size:14.53px;color:#555;letter-spacing:-0.208px;">Per SMS versandt 13.06.2025</span>
<div class="b" style="left:1436px;top:393.09px;width:143px;height:24px;border-radius:3px;background:#3a7bd5"></div>
<svg class="i" style="left:1444.20px;top:400.19px" width="10.29" height="10.29" viewBox="0 -1408 1536 1536"><path fill="#fff" transform="scale(1,-1)" d="M1511 480Q1511 475 1510 473Q1446 205 1242.0 38.5Q1038 -128 764 -128Q618 -128 481.5 -73.0Q345 -18 238 84L109 -45Q90 -64 64.0 -64.0Q38 -64 19.0 -45.0Q0 -26 0 0V448Q0 474 19.0 493.0Q38 512 64 512H512Q538 512 557.0 493.0Q576 474 576.0 448.0Q576 422 557 403L420 266Q491 200 581.0 164.0Q671 128 768 128Q902 128 1018.0 193.0Q1134 258 1204 372Q1215 389 1257 489Q1265 512 1287 512H1479Q1492 512 1501.5 502.5Q1511 493 1511 480ZM1536 1280V832Q1536 806 1517.0 787.0Q1498 768 1472 768H1024Q998 768 979.0 787.0Q960 806 960.0 832.0Q960 858 979 877L1117 1015Q969 1152 768 1152Q634 1152 518.0 1087.0Q402 1022 332 908Q321 891 279 791Q271 768 249 768H50Q37 768 27.5 777.5Q18 787 18 800V807Q83 1075 288.0 1241.5Q493 1408 768 1408Q914 1408 1052.0 1352.5Q1190 1297 1297 1196L1427 1325Q1446 1344 1472.0 1344.0Q1498 1344 1517.0 1325.0Q1536 1306 1536 1280Z"/></svg>
<span class="t " style="left:1459.84px;top:395.00px;font-size:11.65px;color:#fff;letter-spacing:0.333px;-webkit-text-stroke:0.45px #fff;">PDF neu generieren</span>
<div class="b" style="left:1584px;top:393.09px;width:27px;height:24px;border-radius:3px;background:#20a4d1"></div>
<svg class="i" style="left:1592.90px;top:399.09px" width="10.29" height="12.00" viewBox="0 -1536 1536 1792"><path fill="#fff" transform="scale(1,-1)" d="M1468 1156Q1496 1128 1516.0 1080.0Q1536 1032 1536 992V-160Q1536 -200 1508.0 -228.0Q1480 -256 1440 -256H96Q56 -256 28.0 -228.0Q0 -200 0 -160V1440Q0 1480 28.0 1508.0Q56 1536 96 1536H992Q1032 1536 1080.0 1516.0Q1128 1496 1156 1468ZM1024 1400V1024H1400Q1390 1053 1378 1065L1065 1378Q1053 1390 1024 1400ZM1408 -128V896H992Q952 896 924.0 924.0Q896 952 896 992V1408H128V-128ZM894 465Q927 439 978 409Q1037 416 1095 416Q1242 416 1272 367Q1288 345 1274 315Q1274 314 1273.0 313.0Q1272 312 1271 311V310Q1265 272 1200 272Q1152 272 1085.0 292.0Q1018 312 955 345Q734 321 563 262Q410 0 321 0Q306 0 293 7L269 19Q268 20 263 24Q253 34 257 60Q266 100 313.0 151.5Q360 203 445 248Q459 257 468 242Q470 240 470 238Q522 323 577 435Q645 571 681 697Q657 779 650.5 856.5Q644 934 657 984Q668 1024 699 1024H720H721Q744 1024 756 1009Q774 988 765 941Q763 935 761 933Q762 930 762 925V895Q760 772 748 703Q803 539 894 465ZM318 54Q370 78 455 212Q404 172 367.5 128.0Q331 84 318 54ZM716 974Q701 932 714 842Q715 849 721 886Q721 889 728 929Q729 933 732 937Q731 938 731 939Q730 941 730 942Q729 964 717 978Q717 977 716 976ZM592 313Q727 367 876 394Q874 395 863.0 403.5Q852 412 847 417Q771 484 720 593Q693 507 637 396Q607 340 592 313ZM1238 329Q1214 353 1098 353Q1174 325 1222 325Q1236 325 1240 326Q1240 327 1238 329Z"/></svg>
<div class="b" style="left:1614.8px;top:393.09px;width:28.2px;height:24px;border-radius:3px;background:#f8b44c"></div>
<svg class="i" style="left:1622.90px;top:400.49px" width="12.00" height="9.43" viewBox="0 -1280 1792 1408"><path fill="#fff" transform="scale(1,-1)" d="M1792 826V32Q1792 -34 1745.0 -81.0Q1698 -128 1632 -128H160Q94 -128 47.0 -81.0Q0 -34 0 32V826Q44 777 101 739Q463 493 598 394Q655 352 690.5 328.5Q726 305 785.0 280.5Q844 256 895 256H896H897Q948 256 1007.0 280.5Q1066 305 1101.5 328.5Q1137 352 1194 394Q1364 517 1692 739Q1749 778 1792 826ZM1792 1120Q1792 1041 1743.0 969.0Q1694 897 1621 846Q1245 585 1153 521Q1143 514 1110.5 490.5Q1078 467 1056.5 452.5Q1035 438 1004.5 420.0Q974 402 947.0 393.0Q920 384 897 384H896H895Q872 384 845.0 393.0Q818 402 787.5 420.0Q757 438 735.5 452.5Q714 467 681.5 490.5Q649 514 639 521Q548 585 377.0 703.5Q206 822 172 846Q110 888 55.0 961.5Q0 1035 0 1098Q0 1176 41.5 1228.0Q83 1280 160 1280H1632Q1697 1280 1744.5 1233.0Q1792 1186 1792 1120Z"/></svg>
<div class="b" style="left:79px;top:425.62px;width:1578px;height:43.5375px;background:#f9f9f9;"></div>
<div class="b" style="left:79px;top:425.62px;width:1578px;height:1px;background:#ededed;"></div>
<svg class="i" style="left:88px;top:438.62px" width="22" height="22" viewBox="0 0 22 22"><rect x="1.35" y="1.25" width="18.3" height="18.3" fill="#fff" stroke="#d6d6d6" stroke-width="2.5"/></svg>
<span class="t " style="left:133.12px;top:437.00px;font-size:14.53px;color:#555;letter-spacing:-0.137px;">Garage24 Demo</span>
<span class="t " style="left:260.18px;top:437.00px;font-size:14.53px;color:#555;letter-spacing:-0.014px;">Ralf Tester</span>
<span class="t " style="left:411.68px;top:437.00px;font-size:14.53px;color:#555;letter-spacing:0.400px;">Mahnung | 25</span>
<span class="t " style="left:596.68px;top:437.00px;font-size:14.53px;color:#555;letter-spacing:-0.125px;">10.00</span>
<span class="t " style="left:721.18px;top:437.00px;font-size:14.53px;color:#555;letter-spacing:-0.068px;">133</span>
<span class="t " style="left:784.09px;top:437.00px;font-size:14.53px;color:#555;letter-spacing:-0.095px;">314.80 / 1259.25</span>
<span class="t " style="left:920.78px;top:437.00px;font-size:14.53px;color:#555;letter-spacing:-0.181px;">13.06.2025</span>
<span class="t " style="left:1060.13px;top:437.00px;font-size:14.53px;color:#555;letter-spacing:-0.175px;">08.07.2025</span>
<span class="t " style="left:1204.88px;top:437.00px;font-size:14.53px;color:#555;letter-spacing:0.061px;">Nicht gesendet</span>
<div class="b" style="left:1436px;top:436.02px;width:143px;height:24px;border-radius:3px;background:#3a7bd5"></div>
<svg class="i" style="left:1444.20px;top:443.12px" width="10.29" height="10.29" viewBox="0 -1408 1536 1536"><path fill="#fff" transform="scale(1,-1)" d="M1511 480Q1511 475 1510 473Q1446 205 1242.0 38.5Q1038 -128 764 -128Q618 -128 481.5 -73.0Q345 -18 238 84L109 -45Q90 -64 64.0 -64.0Q38 -64 19.0 -45.0Q0 -26 0 0V448Q0 474 19.0 493.0Q38 512 64 512H512Q538 512 557.0 493.0Q576 474 576.0 448.0Q576 422 557 403L420 266Q491 200 581.0 164.0Q671 128 768 128Q902 128 1018.0 193.0Q1134 258 1204 372Q1215 389 1257 489Q1265 512 1287 512H1479Q1492 512 1501.5 502.5Q1511 493 1511 480ZM1536 1280V832Q1536 806 1517.0 787.0Q1498 768 1472 768H1024Q998 768 979.0 787.0Q960 806 960.0 832.0Q960 858 979 877L1117 1015Q969 1152 768 1152Q634 1152 518.0 1087.0Q402 1022 332 908Q321 891 279 791Q271 768 249 768H50Q37 768 27.5 777.5Q18 787 18 800V807Q83 1075 288.0 1241.5Q493 1408 768 1408Q914 1408 1052.0 1352.5Q1190 1297 1297 1196L1427 1325Q1446 1344 1472.0 1344.0Q1498 1344 1517.0 1325.0Q1536 1306 1536 1280Z"/></svg>
<span class="t " style="left:1459.84px;top:438.00px;font-size:11.65px;color:#fff;letter-spacing:0.333px;-webkit-text-stroke:0.45px #fff;">PDF neu generieren</span>
<div class="b" style="left:1584px;top:436.02px;width:27px;height:24px;border-radius:3px;background:#20a4d1"></div>
<svg class="i" style="left:1592.90px;top:442.02px" width="10.29" height="12.00" viewBox="0 -1536 1536 1792"><path fill="#fff" transform="scale(1,-1)" d="M1468 1156Q1496 1128 1516.0 1080.0Q1536 1032 1536 992V-160Q1536 -200 1508.0 -228.0Q1480 -256 1440 -256H96Q56 -256 28.0 -228.0Q0 -200 0 -160V1440Q0 1480 28.0 1508.0Q56 1536 96 1536H992Q1032 1536 1080.0 1516.0Q1128 1496 1156 1468ZM1024 1400V1024H1400Q1390 1053 1378 1065L1065 1378Q1053 1390 1024 1400ZM1408 -128V896H992Q952 896 924.0 924.0Q896 952 896 992V1408H128V-128ZM894 465Q927 439 978 409Q1037 416 1095 416Q1242 416 1272 367Q1288 345 1274 315Q1274 314 1273.0 313.0Q1272 312 1271 311V310Q1265 272 1200 272Q1152 272 1085.0 292.0Q1018 312 955 345Q734 321 563 262Q410 0 321 0Q306 0 293 7L269 19Q268 20 263 24Q253 34 257 60Q266 100 313.0 151.5Q360 203 445 248Q459 257 468 242Q470 240 470 238Q522 323 577 435Q645 571 681 697Q657 779 650.5 856.5Q644 934 657 984Q668 1024 699 1024H720H721Q744 1024 756 1009Q774 988 765 941Q763 935 761 933Q762 930 762 925V895Q760 772 748 703Q803 539 894 465ZM318 54Q370 78 455 212Q404 172 367.5 128.0Q331 84 318 54ZM716 974Q701 932 714 842Q715 849 721 886Q721 889 728 929Q729 933 732 937Q731 938 731 939Q730 941 730 942Q729 964 717 978Q717 977 716 976ZM592 313Q727 367 876 394Q874 395 863.0 403.5Q852 412 847 417Q771 484 720 593Q693 507 637 396Q607 340 592 313ZM1238 329Q1214 353 1098 353Q1174 325 1222 325Q1236 325 1240 326Q1240 327 1238 329Z"/></svg>
<div class="b" style="left:1614.8px;top:436.02px;width:28.2px;height:24px;border-radius:3px;background:#f8b44c"></div>
<svg class="i" style="left:1622.90px;top:443.42px" width="12.00" height="9.43" viewBox="0 -1280 1792 1408"><path fill="#fff" transform="scale(1,-1)" d="M1792 826V32Q1792 -34 1745.0 -81.0Q1698 -128 1632 -128H160Q94 -128 47.0 -81.0Q0 -34 0 32V826Q44 777 101 739Q463 493 598 394Q655 352 690.5 328.5Q726 305 785.0 280.5Q844 256 895 256H896H897Q948 256 1007.0 280.5Q1066 305 1101.5 328.5Q1137 352 1194 394Q1364 517 1692 739Q1749 778 1792 826ZM1792 1120Q1792 1041 1743.0 969.0Q1694 897 1621 846Q1245 585 1153 521Q1143 514 1110.5 490.5Q1078 467 1056.5 452.5Q1035 438 1004.5 420.0Q974 402 947.0 393.0Q920 384 897 384H896H895Q872 384 845.0 393.0Q818 402 787.5 420.0Q757 438 735.5 452.5Q714 467 681.5 490.5Q649 514 639 521Q548 585 377.0 703.5Q206 822 172 846Q110 888 55.0 961.5Q0 1035 0 1098Q0 1176 41.5 1228.0Q83 1280 160 1280H1632Q1697 1280 1744.5 1233.0Q1792 1186 1792 1120Z"/></svg>
<div class="b" style="left:79px;top:468.56px;width:1578px;height:1px;background:#ededed;"></div>
<svg class="i" style="left:88px;top:481.56px" width="22" height="22" viewBox="0 0 22 22"><rect x="1.35" y="1.25" width="18.3" height="18.3" fill="#fff" stroke="#d6d6d6" stroke-width="2.5"/></svg>
<span class="t " style="left:133.12px;top:480.00px;font-size:14.53px;color:#555;letter-spacing:-0.137px;">Garage24 Demo</span>
<span class="t " style="left:259.97px;top:480.00px;font-size:14.53px;color:#555;letter-spacing:0.070px;">Alain Sutter</span>
<span class="t " style="left:411.68px;top:480.00px;font-size:14.53px;color:#555;letter-spacing:0.344px;">Betreibung | 50</span>
<span class="t " style="left:596.83px;top:480.00px;font-size:14.53px;color:#555;letter-spacing:-0.125px;">50.00</span>
<span class="t " style="left:721.18px;top:480.00px;font-size:14.53px;color:#555;letter-spacing:-0.068px;">131</span>
<span class="t " style="left:784.33px;top:480.00px;font-size:14.53px;color:#555;letter-spacing:-0.111px;">596.79 / 1291.75</span>
<span class="t " style="left:920.78px;top:480.00px;font-size:14.53px;color:#555;letter-spacing:-0.181px;">13.06.2025</span>
<span class="t " style="left:1060.13px;top:480.00px;font-size:14.53px;color:#555;letter-spacing:-0.175px;">02.08.2025</span>
<span class="t " style="left:1204.88px;top:480.00px;font-size:14.53px;color:#555;letter-spacing:0.061px;">Nicht gesendet</span>
<div class="b" style="left:1436px;top:478.96px;width:143px;height:24px;border-radius:3px;background:#3a7bd5"></div>
<svg class="i" style="left:1444.20px;top:486.06px" width="10.29" height="10.29" viewBox="0 -1408 1536 1536"><path fill="#fff" transform="scale(1,-1)" d="M1511 480Q1511 475 1510 473Q1446 205 1242.0 38.5Q1038 -128 764 -128Q618 -128 481.5 -73.0Q345 -18 238 84L109 -45Q90 -64 64.0 -64.0Q38 -64 19.0 -45.0Q0 -26 0 0V448Q0 474 19.0 493.0Q38 512 64 512H512Q538 512 557.0 493.0Q576 474 576.0 448.0Q576 422 557 403L420 266Q491 200 581.0 164.0Q671 128 768 128Q902 128 1018.0 193.0Q1134 258 1204 372Q1215 389 1257 489Q1265 512 1287 512H1479Q1492 512 1501.5 502.5Q1511 493 1511 480ZM1536 1280V832Q1536 806 1517.0 787.0Q1498 768 1472 768H1024Q998 768 979.0 787.0Q960 806 960.0 832.0Q960 858 979 877L1117 1015Q969 1152 768 1152Q634 1152 518.0 1087.0Q402 1022 332 908Q321 891 279 791Q271 768 249 768H50Q37 768 27.5 777.5Q18 787 18 800V807Q83 1075 288.0 1241.5Q493 1408 768 1408Q914 1408 1052.0 1352.5Q1190 1297 1297 1196L1427 1325Q1446 1344 1472.0 1344.0Q1498 1344 1517.0 1325.0Q1536 1306 1536 1280Z"/></svg>
<span class="t " style="left:1459.84px;top:481.00px;font-size:11.65px;color:#fff;letter-spacing:0.333px;-webkit-text-stroke:0.45px #fff;">PDF neu generieren</span>
<div class="b" style="left:1584px;top:478.96px;width:27px;height:24px;border-radius:3px;background:#20a4d1"></div>
<svg class="i" style="left:1592.90px;top:484.96px" width="10.29" height="12.00" viewBox="0 -1536 1536 1792"><path fill="#fff" transform="scale(1,-1)" d="M1468 1156Q1496 1128 1516.0 1080.0Q1536 1032 1536 992V-160Q1536 -200 1508.0 -228.0Q1480 -256 1440 -256H96Q56 -256 28.0 -228.0Q0 -200 0 -160V1440Q0 1480 28.0 1508.0Q56 1536 96 1536H992Q1032 1536 1080.0 1516.0Q1128 1496 1156 1468ZM1024 1400V1024H1400Q1390 1053 1378 1065L1065 1378Q1053 1390 1024 1400ZM1408 -128V896H992Q952 896 924.0 924.0Q896 952 896 992V1408H128V-128ZM894 465Q927 439 978 409Q1037 416 1095 416Q1242 416 1272 367Q1288 345 1274 315Q1274 314 1273.0 313.0Q1272 312 1271 311V310Q1265 272 1200 272Q1152 272 1085.0 292.0Q1018 312 955 345Q734 321 563 262Q410 0 321 0Q306 0 293 7L269 19Q268 20 263 24Q253 34 257 60Q266 100 313.0 151.5Q360 203 445 248Q459 257 468 242Q470 240 470 238Q522 323 577 435Q645 571 681 697Q657 779 650.5 856.5Q644 934 657 984Q668 1024 699 1024H720H721Q744 1024 756 1009Q774 988 765 941Q763 935 761 933Q762 930 762 925V895Q760 772 748 703Q803 539 894 465ZM318 54Q370 78 455 212Q404 172 367.5 128.0Q331 84 318 54ZM716 974Q701 932 714 842Q715 849 721 886Q721 889 728 929Q729 933 732 937Q731 938 731 939Q730 941 730 942Q729 964 717 978Q717 977 716 976ZM592 313Q727 367 876 394Q874 395 863.0 403.5Q852 412 847 417Q771 484 720 593Q693 507 637 396Q607 340 592 313ZM1238 329Q1214 353 1098 353Q1174 325 1222 325Q1236 325 1240 326Q1240 327 1238 329Z"/></svg>
<div class="b" style="left:1614.8px;top:478.96px;width:28.2px;height:24px;border-radius:3px;background:#f8b44c"></div>
<svg class="i" style="left:1622.90px;top:486.36px" width="12.00" height="9.43" viewBox="0 -1280 1792 1408"><path fill="#fff" transform="scale(1,-1)" d="M1792 826V32Q1792 -34 1745.0 -81.0Q1698 -128 1632 -128H160Q94 -128 47.0 -81.0Q0 -34 0 32V826Q44 777 101 739Q463 493 598 394Q655 352 690.5 328.5Q726 305 785.0 280.5Q844 256 895 256H896H897Q948 256 1007.0 280.5Q1066 305 1101.5 328.5Q1137 352 1194 394Q1364 517 1692 739Q1749 778 1792 826ZM1792 1120Q1792 1041 1743.0 969.0Q1694 897 1621 846Q1245 585 1153 521Q1143 514 1110.5 490.5Q1078 467 1056.5 452.5Q1035 438 1004.5 420.0Q974 402 947.0 393.0Q920 384 897 384H896H895Q872 384 845.0 393.0Q818 402 787.5 420.0Q757 438 735.5 452.5Q714 467 681.5 490.5Q649 514 639 521Q548 585 377.0 703.5Q206 822 172 846Q110 888 55.0 961.5Q0 1035 0 1098Q0 1176 41.5 1228.0Q83 1280 160 1280H1632Q1697 1280 1744.5 1233.0Q1792 1186 1792 1120Z"/></svg>
<div class="b" style="left:79px;top:511.50px;width:1578px;height:43.5375px;background:#f9f9f9;"></div>
<div class="b" style="left:79px;top:511.50px;width:1578px;height:1px;background:#ededed;"></div>
<svg class="i" style="left:88px;top:524.5px" width="22" height="22" viewBox="0 0 22 22"><rect x="1.35" y="1.25" width="18.3" height="18.3" fill="#fff" stroke="#d6d6d6" stroke-width="2.5"/></svg>
<span class="t " style="left:133.12px;top:523.00px;font-size:14.53px;color:#555;letter-spacing:-0.137px;">Garage24 Demo</span>
<span class="t " style="left:260.18px;top:523.00px;font-size:14.53px;color:#555;letter-spacing:0.271px;">Bettina Testmüller</span>
<span class="t " style="left:411.60px;top:523.00px;font-size:14.53px;color:#555;letter-spacing:0.257px;">Zahlungserinnerung | 10</span>
<span class="t " style="left:596.63px;top:523.00px;font-size:14.53px;color:#555;letter-spacing:-0.141px;">0.00</span>
<span class="t " style="left:721.18px;top:523.00px;font-size:14.53px;color:#555;letter-spacing:-0.068px;">126</span>
<span class="t " style="left:784.18px;top:523.00px;font-size:14.53px;color:#555;letter-spacing:-0.095px;">1535.30 / 4605.80</span>
<span class="t " style="left:920.78px;top:523.00px;font-size:14.53px;color:#555;letter-spacing:-0.181px;">12.06.2025</span>
<span class="t " style="left:1059.95px;top:523.00px;font-size:14.53px;color:#555;letter-spacing:-0.155px;">22.06.2025</span>
<span class="t " style="left:1204.88px;top:523.00px;font-size:14.53px;color:#555;letter-spacing:0.061px;">Nicht gesendet</span>
<div class="b" style="left:1436px;top:521.90px;width:143px;height:24px;border-radius:3px;background:#3a7bd5"></div>
<svg class="i" style="left:1444.20px;top:529.00px" width="10.29" height="10.29" viewBox="0 -1408 1536 1536"><path fill="#fff" transform="scale(1,-1)" d="M1511 480Q1511 475 1510 473Q1446 205 1242.0 38.5Q1038 -128 764 -128Q618 -128 481.5 -73.0Q345 -18 238 84L109 -45Q90 -64 64.0 -64.0Q38 -64 19.0 -45.0Q0 -26 0 0V448Q0 474 19.0 493.0Q38 512 64 512H512Q538 512 557.0 493.0Q576 474 576.0 448.0Q576 422 557 403L420 266Q491 200 581.0 164.0Q671 128 768 128Q902 128 1018.0 193.0Q1134 258 1204 372Q1215 389 1257 489Q1265 512 1287 512H1479Q1492 512 1501.5 502.5Q1511 493 1511 480ZM1536 1280V832Q1536 806 1517.0 787.0Q1498 768 1472 768H1024Q998 768 979.0 787.0Q960 806 960.0 832.0Q960 858 979 877L1117 1015Q969 1152 768 1152Q634 1152 518.0 1087.0Q402 1022 332 908Q321 891 279 791Q271 768 249 768H50Q37 768 27.5 777.5Q18 787 18 800V807Q83 1075 288.0 1241.5Q493 1408 768 1408Q914 1408 1052.0 1352.5Q1190 1297 1297 1196L1427 1325Q1446 1344 1472.0 1344.0Q1498 1344 1517.0 1325.0Q1536 1306 1536 1280Z"/></svg>
<span class="t " style="left:1459.84px;top:524.00px;font-size:11.65px;color:#fff;letter-spacing:0.333px;-webkit-text-stroke:0.45px #fff;">PDF neu generieren</span>
<div class="b" style="left:1584px;top:521.90px;width:27px;height:24px;border-radius:3px;background:#20a4d1"></div>
<svg class="i" style="left:1592.90px;top:527.90px" width="10.29" height="12.00" viewBox="0 -1536 1536 1792"><path fill="#fff" transform="scale(1,-1)" d="M1468 1156Q1496 1128 1516.0 1080.0Q1536 1032 1536 992V-160Q1536 -200 1508.0 -228.0Q1480 -256 1440 -256H96Q56 -256 28.0 -228.0Q0 -200 0 -160V1440Q0 1480 28.0 1508.0Q56 1536 96 1536H992Q1032 1536 1080.0 1516.0Q1128 1496 1156 1468ZM1024 1400V1024H1400Q1390 1053 1378 1065L1065 1378Q1053 1390 1024 1400ZM1408 -128V896H992Q952 896 924.0 924.0Q896 952 896 992V1408H128V-128ZM894 465Q927 439 978 409Q1037 416 1095 416Q1242 416 1272 367Q1288 345 1274 315Q1274 314 1273.0 313.0Q1272 312 1271 311V310Q1265 272 1200 272Q1152 272 1085.0 292.0Q1018 312 955 345Q734 321 563 262Q410 0 321 0Q306 0 293 7L269 19Q268 20 263 24Q253 34 257 60Q266 100 313.0 151.5Q360 203 445 248Q459 257 468 242Q470 240 470 238Q522 323 577 435Q645 571 681 697Q657 779 650.5 856.5Q644 934 657 984Q668 1024 699 1024H720H721Q744 1024 756 1009Q774 988 765 941Q763 935 761 933Q762 930 762 925V895Q760 772 748 703Q803 539 894 465ZM318 54Q370 78 455 212Q404 172 367.5 128.0Q331 84 318 54ZM716 974Q701 932 714 842Q715 849 721 886Q721 889 728 929Q729 933 732 937Q731 938 731 939Q730 941 730 942Q729 964 717 978Q717 977 716 976ZM592 313Q727 367 876 394Q874 395 863.0 403.5Q852 412 847 417Q771 484 720 593Q693 507 637 396Q607 340 592 313ZM1238 329Q1214 353 1098 353Q1174 325 1222 325Q1236 325 1240 326Q1240 327 1238 329Z"/></svg>
<div class="b" style="left:1614.8px;top:521.90px;width:28.2px;height:24px;border-radius:3px;background:#f8b44c"></div>
<svg class="i" style="left:1622.90px;top:529.30px" width="12.00" height="9.43" viewBox="0 -1280 1792 1408"><path fill="#fff" transform="scale(1,-1)" d="M1792 826V32Q1792 -34 1745.0 -81.0Q1698 -128 1632 -128H160Q94 -128 47.0 -81.0Q0 -34 0 32V826Q44 777 101 739Q463 493 598 394Q655 352 690.5 328.5Q726 305 785.0 280.5Q844 256 895 256H896H897Q948 256 1007.0 280.5Q1066 305 1101.5 328.5Q1137 352 1194 394Q1364 517 1692 739Q1749 778 1792 826ZM1792 1120Q1792 1041 1743.0 969.0Q1694 897 1621 846Q1245 585 1153 521Q1143 514 1110.5 490.5Q1078 467 1056.5 452.5Q1035 438 1004.5 420.0Q974 402 947.0 393.0Q920 384 897 384H896H895Q872 384 845.0 393.0Q818 402 787.5 420.0Q757 438 735.5 452.5Q714 467 681.5 490.5Q649 514 639 521Q548 585 377.0 703.5Q206 822 172 846Q110 888 55.0 961.5Q0 1035 0 1098Q0 1176 41.5 1228.0Q83 1280 160 1280H1632Q1697 1280 1744.5 1233.0Q1792 1186 1792 1120Z"/></svg>
<div class="b" style="left:79px;top:554.44px;width:1578px;height:1px;background:#ededed;"></div>
<svg class="i" style="left:88px;top:567.44px" width="22" height="22" viewBox="0 0 22 22"><rect x="1.35" y="1.25" width="18.3" height="18.3" fill="#fff" stroke="#d6d6d6" stroke-width="2.5"/></svg>
<span class="t " style="left:133.12px;top:566.00px;font-size:14.53px;color:#555;letter-spacing:-0.137px;">Garage24 Demo</span>
<span class="t " style="left:260.18px;top:566.00px;font-size:14.53px;color:#555;letter-spacing:-0.014px;">Ralf Tester</span>
<span class="t " style="left:411.60px;top:566.00px;font-size:14.53px;color:#555;letter-spacing:0.257px;">Zahlungserinnerung | 10</span>
<span class="t " style="left:596.63px;top:566.00px;font-size:14.53px;color:#555;letter-spacing:-0.141px;">0.00</span>
<span class="t " style="left:721.18px;top:566.00px;font-size:14.53px;color:#555;letter-spacing:-0.068px;">133</span>
<span class="t " style="left:783.95px;top:566.00px;font-size:14.53px;color:#555;letter-spacing:-0.086px;">214.80 / 1259.25</span>
<span class="t " style="left:920.73px;top:566.00px;font-size:14.53px;color:#555;letter-spacing:-0.175px;">05.06.2025</span>
<span class="t " style="left:1060.18px;top:566.00px;font-size:14.53px;color:#555;letter-spacing:-0.181px;">15.06.2025</span>
<span class="t " style="left:1204.88px;top:566.00px;font-size:14.53px;color:#555;letter-spacing:0.061px;">Nicht gesendet</span>
<div class="b" style="left:1436px;top:564.84px;width:143px;height:24px;border-radius:3px;background:#3a7bd5"></div>
<svg class="i" style="left:1444.20px;top:571.94px" width="10.29" height="10.29" viewBox="0 -1408 1536 1536"><path fill="#fff" transform="scale(1,-1)" d="M1511 480Q1511 475 1510 473Q1446 205 1242.0 38.5Q1038 -128 764 -128Q618 -128 481.5 -73.0Q345 -18 238 84L109 -45Q90 -64 64.0 -64.0Q38 -64 19.0 -45.0Q0 -26 0 0V448Q0 474 19.0 493.0Q38 512 64 512H512Q538 512 557.0 493.0Q576 474 576.0 448.0Q576 422 557 403L420 266Q491 200 581.0 164.0Q671 128 768 128Q902 128 1018.0 193.0Q1134 258 1204 372Q1215 389 1257 489Q1265 512 1287 512H1479Q1492 512 1501.5 502.5Q1511 493 1511 480ZM1536 1280V832Q1536 806 1517.0 787.0Q1498 768 1472 768H1024Q998 768 979.0 787.0Q960 806 960.0 832.0Q960 858 979 877L1117 1015Q969 1152 768 1152Q634 1152 518.0 1087.0Q402 1022 332 908Q321 891 279 791Q271 768 249 768H50Q37 768 27.5 777.5Q18 787 18 800V807Q83 1075 288.0 1241.5Q493 1408 768 1408Q914 1408 1052.0 1352.5Q1190 1297 1297 1196L1427 1325Q1446 1344 1472.0 1344.0Q1498 1344 1517.0 1325.0Q1536 1306 1536 1280Z"/></svg>
<span class="t " style="left:1459.84px;top:567.00px;font-size:11.65px;color:#fff;letter-spacing:0.333px;-webkit-text-stroke:0.45px #fff;">PDF neu generieren</span>
<div class="b" style="left:1584px;top:564.84px;width:27px;height:24px;border-radius:3px;background:#20a4d1"></div>
<svg class="i" style="left:1592.90px;top:570.84px" width="10.29" height="12.00" viewBox="0 -1536 1536 1792"><path fill="#fff" transform="scale(1,-1)" d="M1468 1156Q1496 1128 1516.0 1080.0Q1536 1032 1536 992V-160Q1536 -200 1508.0 -228.0Q1480 -256 1440 -256H96Q56 -256 28.0 -228.0Q0 -200 0 -160V1440Q0 1480 28.0 1508.0Q56 1536 96 1536H992Q1032 1536 1080.0 1516.0Q1128 1496 1156 1468ZM1024 1400V1024H1400Q1390 1053 1378 1065L1065 1378Q1053 1390 1024 1400ZM1408 -128V896H992Q952 896 924.0 924.0Q896 952 896 992V1408H128V-128ZM894 465Q927 439 978 409Q1037 416 1095 416Q1242 416 1272 367Q1288 345 1274 315Q1274 314 1273.0 313.0Q1272 312 1271 311V310Q1265 272 1200 272Q1152 272 1085.0 292.0Q1018 312 955 345Q734 321 563 262Q410 0 321 0Q306 0 293 7L269 19Q268 20 263 24Q253 34 257 60Q266 100 313.0 151.5Q360 203 445 248Q459 257 468 242Q470 240 470 238Q522 323 577 435Q645 571 681 697Q657 779 650.5 856.5Q644 934 657 984Q668 1024 699 1024H720H721Q744 1024 756 1009Q774 988 765 941Q763 935 761 933Q762 930 762 925V895Q760 772 748 703Q803 539 894 465ZM318 54Q370 78 455 212Q404 172 367.5 128.0Q331 84 318 54ZM716 974Q701 932 714 842Q715 849 721 886Q721 889 728 929Q729 933 732 937Q731 938 731 939Q730 941 730 942Q729 964 717 978Q717 977 716 976ZM592 313Q727 367 876 394Q874 395 863.0 403.5Q852 412 847 417Q771 484 720 593Q693 507 637 396Q607 340 592 313ZM1238 329Q1214 353 1098 353Q1174 325 1222 325Q1236 325 1240 326Q1240 327 1238 329Z"/></svg>
<div class="b" style="left:1614.8px;top:564.84px;width:28.2px;height:24px;border-radius:3px;background:#f8b44c"></div>
<svg class="i" style="left:1622.90px;top:572.24px" width="12.00" height="9.43" viewBox="0 -1280 1792 1408"><path fill="#fff" transform="scale(1,-1)" d="M1792 826V32Q1792 -34 1745.0 -81.0Q1698 -128 1632 -128H160Q94 -128 47.0 -81.0Q0 -34 0 32V826Q44 777 101 739Q463 493 598 394Q655 352 690.5 328.5Q726 305 785.0 280.5Q844 256 895 256H896H897Q948 256 1007.0 280.5Q1066 305 1101.5 328.5Q1137 352 1194 394Q1364 517 1692 739Q1749 778 1792 826ZM1792 1120Q1792 1041 1743.0 969.0Q1694 897 1621 846Q1245 585 1153 521Q1143 514 1110.5 490.5Q1078 467 1056.5 452.5Q1035 438 1004.5 420.0Q974 402 947.0 393.0Q920 384 897 384H896H895Q872 384 845.0 393.0Q818 402 787.5 420.0Q757 438 735.5 452.5Q714 467 681.5 490.5Q649 514 639 521Q548 585 377.0 703.5Q206 822 172 846Q110 888 55.0 961.5Q0 1035 0 1098Q0 1176 41.5 1228.0Q83 1280 160 1280H1632Q1697 1280 1744.5 1233.0Q1792 1186 1792 1120Z"/></svg>
<div class="b" style="left:79px;top:597.38px;width:1578px;height:43.5375px;background:#f9f9f9;"></div>
<div class="b" style="left:79px;top:597.38px;width:1578px;height:1px;background:#ededed;"></div>
<svg class="i" style="left:88px;top:610.38px" width="22" height="22" viewBox="0 0 22 22"><rect x="1.35" y="1.25" width="18.3" height="18.3" fill="#fff" stroke="#d6d6d6" stroke-width="2.5"/></svg>
<span class="t " style="left:133.12px;top:609.00px;font-size:14.53px;color:#555;letter-spacing:-0.137px;">Garage24 Demo</span>
<span class="t " style="left:260.18px;top:609.00px;font-size:14.53px;color:#555;letter-spacing:0.271px;">Bettina Testmüller</span>
<span class="t " style="left:411.60px;top:609.00px;font-size:14.53px;color:#555;letter-spacing:0.257px;">Zahlungserinnerung | 10</span>
<span class="t " style="left:596.63px;top:609.00px;font-size:14.53px;color:#555;letter-spacing:-0.141px;">0.00</span>
<span class="t " style="left:721.18px;top:609.00px;font-size:14.53px;color:#555;letter-spacing:-0.068px;">190</span>
<span class="t " style="left:784.18px;top:609.00px;font-size:14.53px;color:#555;letter-spacing:-0.100px;">123.40 / 335.10</span>
<span class="t " style="left:920.73px;top:609.00px;font-size:14.53px;color:#555;letter-spacing:-0.175px;">05.06.2025</span>
<span class="t " style="left:1060.18px;top:609.00px;font-size:14.53px;color:#555;letter-spacing:-0.181px;">15.06.2025</span>
<span class="t " style="left:1204.88px;top:609.00px;font-size:14.53px;color:#555;letter-spacing:-0.156px;">Per E-Mail gesendet 05.06.2025</span>
<div class="b" style="left:1436px;top:607.77px;width:143px;height:24px;border-radius:3px;background:#3a7bd5"></div>
<svg class="i" style="left:1444.20px;top:614.88px" width="10.29" height="10.29" viewBox="0 -1408 1536 1536"><path fill="#fff" transform="scale(1,-1)" d="M1511 480Q1511 475 1510 473Q1446 205 1242.0 38.5Q1038 -128 764 -128Q618 -128 481.5 -73.0Q345 -18 238 84L109 -45Q90 -64 64.0 -64.0Q38 -64 19.0 -45.0Q0 -26 0 0V448Q0 474 19.0 493.0Q38 512 64 512H512Q538 512 557.0 493.0Q576 474 576.0 448.0Q576 422 557 403L420 266Q491 200 581.0 164.0Q671 128 768 128Q902 128 1018.0 193.0Q1134 258 1204 372Q1215 389 1257 489Q1265 512 1287 512H1479Q1492 512 1501.5 502.5Q1511 493 1511 480ZM1536 1280V832Q1536 806 1517.0 787.0Q1498 768 1472 768H1024Q998 768 979.0 787.0Q960 806 960.0 832.0Q960 858 979 877L1117 1015Q969 1152 768 1152Q634 1152 518.0 1087.0Q402 1022 332 908Q321 891 279 791Q271 768 249 768H50Q37 768 27.5 777.5Q18 787 18 800V807Q83 1075 288.0 1241.5Q493 1408 768 1408Q914 1408 1052.0 1352.5Q1190 1297 1297 1196L1427 1325Q1446 1344 1472.0 1344.0Q1498 1344 1517.0 1325.0Q1536 1306 1536 1280Z"/></svg>
<span class="t " style="left:1459.84px;top:610.00px;font-size:11.65px;color:#fff;letter-spacing:0.333px;-webkit-text-stroke:0.45px #fff;">PDF neu generieren</span>
<div class="b" style="left:1584px;top:607.77px;width:27px;height:24px;border-radius:3px;background:#20a4d1"></div>
<svg class="i" style="left:1592.90px;top:613.77px" width="10.29" height="12.00" viewBox="0 -1536 1536 1792"><path fill="#fff" transform="scale(1,-1)" d="M1468 1156Q1496 1128 1516.0 1080.0Q1536 1032 1536 992V-160Q1536 -200 1508.0 -228.0Q1480 -256 1440 -256H96Q56 -256 28.0 -228.0Q0 -200 0 -160V1440Q0 1480 28.0 1508.0Q56 1536 96 1536H992Q1032 1536 1080.0 1516.0Q1128 1496 1156 1468ZM1024 1400V1024H1400Q1390 1053 1378 1065L1065 1378Q1053 1390 1024 1400ZM1408 -128V896H992Q952 896 924.0 924.0Q896 952 896 992V1408H128V-128ZM894 465Q927 439 978 409Q1037 416 1095 416Q1242 416 1272 367Q1288 345 1274 315Q1274 314 1273.0 313.0Q1272 312 1271 311V310Q1265 272 1200 272Q1152 272 1085.0 292.0Q1018 312 955 345Q734 321 563 262Q410 0 321 0Q306 0 293 7L269 19Q268 20 263 24Q253 34 257 60Q266 100 313.0 151.5Q360 203 445 248Q459 257 468 242Q470 240 470 238Q522 323 577 435Q645 571 681 697Q657 779 650.5 856.5Q644 934 657 984Q668 1024 699 1024H720H721Q744 1024 756 1009Q774 988 765 941Q763 935 761 933Q762 930 762 925V895Q760 772 748 703Q803 539 894 465ZM318 54Q370 78 455 212Q404 172 367.5 128.0Q331 84 318 54ZM716 974Q701 932 714 842Q715 849 721 886Q721 889 728 929Q729 933 732 937Q731 938 731 939Q730 941 730 942Q729 964 717 978Q717 977 716 976ZM592 313Q727 367 876 394Q874 395 863.0 403.5Q852 412 847 417Q771 484 720 593Q693 507 637 396Q607 340 592 313ZM1238 329Q1214 353 1098 353Q1174 325 1222 325Q1236 325 1240 326Q1240 327 1238 329Z"/></svg>
<div class="b" style="left:1614.8px;top:607.77px;width:28.2px;height:24px;border-radius:3px;background:#f8b44c"></div>
<svg class="i" style="left:1622.90px;top:615.17px" width="12.00" height="9.43" viewBox="0 -1280 1792 1408"><path fill="#fff" transform="scale(1,-1)" d="M1792 826V32Q1792 -34 1745.0 -81.0Q1698 -128 1632 -128H160Q94 -128 47.0 -81.0Q0 -34 0 32V826Q44 777 101 739Q463 493 598 394Q655 352 690.5 328.5Q726 305 785.0 280.5Q844 256 895 256H896H897Q948 256 1007.0 280.5Q1066 305 1101.5 328.5Q1137 352 1194 394Q1364 517 1692 739Q1749 778 1792 826ZM1792 1120Q1792 1041 1743.0 969.0Q1694 897 1621 846Q1245 585 1153 521Q1143 514 1110.5 490.5Q1078 467 1056.5 452.5Q1035 438 1004.5 420.0Q974 402 947.0 393.0Q920 384 897 384H896H895Q872 384 845.0 393.0Q818 402 787.5 420.0Q757 438 735.5 452.5Q714 467 681.5 490.5Q649 514 639 521Q548 585 377.0 703.5Q206 822 172 846Q110 888 55.0 961.5Q0 1035 0 1098Q0 1176 41.5 1228.0Q83 1280 160 1280H1632Q1697 1280 1744.5 1233.0Q1792 1186 1792 1120Z"/></svg>
<div class="b" style="left:79px;top:640.31px;width:1578px;height:1px;background:#ededed;"></div>
<svg class="i" style="left:88px;top:653.31px" width="22" height="22" viewBox="0 0 22 22"><rect x="1.35" y="1.25" width="18.3" height="18.3" fill="#fff" stroke="#d6d6d6" stroke-width="2.5"/></svg>
<span class="t " style="left:133.12px;top:652.00px;font-size:14.53px;color:#555;letter-spacing:-0.137px;">Garage24 Demo</span>
<span class="t " style="left:260.18px;top:652.00px;font-size:14.53px;color:#555;letter-spacing:0.271px;">Bettina Testmüller</span>
<span class="t " style="left:411.60px;top:652.00px;font-size:14.53px;color:#555;letter-spacing:0.257px;">Zahlungserinnerung | 10</span>
<span class="t " style="left:596.63px;top:652.00px;font-size:14.53px;color:#555;letter-spacing:-0.141px;">0.00</span>
<span class="t " style="left:721.18px;top:652.00px;font-size:14.53px;color:#555;letter-spacing:-0.068px;">170</span>
<span class="t " style="left:784.33px;top:652.00px;font-size:14.53px;color:#555;letter-spacing:-0.113px;">51.30 / 256.50</span>
<span class="t " style="left:920.73px;top:652.00px;font-size:14.53px;color:#555;letter-spacing:-0.175px;">03.06.2025</span>
<span class="t " style="left:1060.18px;top:652.00px;font-size:14.53px;color:#555;letter-spacing:-0.181px;">13.06.2025</span>
<span class="t " style="left:1204.88px;top:652.00px;font-size:14.53px;color:#555;letter-spacing:-0.208px;">Per SMS versandt 04.06.2025</span>
<div class="b" style="left:1436px;top:650.71px;width:143px;height:24px;border-radius:3px;background:#3a7bd5"></div>
<svg class="i" style="left:1444.20px;top:657.81px" width="10.29" height="10.29" viewBox="0 -1408 1536 1536"><path fill="#fff" transform="scale(1,-1)" d="M1511 480Q1511 475 1510 473Q1446 205 1242.0 38.5Q1038 -128 764 -128Q618 -128 481.5 -73.0Q345 -18 238 84L109 -45Q90 -64 64.0 -64.0Q38 -64 19.0 -45.0Q0 -26 0 0V448Q0 474 19.0 493.0Q38 512 64 512H512Q538 512 557.0 493.0Q576 474 576.0 448.0Q576 422 557 403L420 266Q491 200 581.0 164.0Q671 128 768 128Q902 128 1018.0 193.0Q1134 258 1204 372Q1215 389 1257 489Q1265 512 1287 512H1479Q1492 512 1501.5 502.5Q1511 493 1511 480ZM1536 1280V832Q1536 806 1517.0 787.0Q1498 768 1472 768H1024Q998 768 979.0 787.0Q960 806 960.0 832.0Q960 858 979 877L1117 1015Q969 1152 768 1152Q634 1152 518.0 1087.0Q402 1022 332 908Q321 891 279 791Q271 768 249 768H50Q37 768 27.5 777.5Q18 787 18 800V807Q83 1075 288.0 1241.5Q493 1408 768 1408Q914 1408 1052.0 1352.5Q1190 1297 1297 1196L1427 1325Q1446 1344 1472.0 1344.0Q1498 1344 1517.0 1325.0Q1536 1306 1536 1280Z"/></svg>
<span class="t " style="left:1459.84px;top:653.00px;font-size:11.65px;color:#fff;letter-spacing:0.333px;-webkit-text-stroke:0.45px #fff;">PDF neu generieren</span>
<div class="b" style="left:1584px;top:650.71px;width:27px;height:24px;border-radius:3px;background:#20a4d1"></div>
<svg class="i" style="left:1592.90px;top:656.71px" width="10.29" height="12.00" viewBox="0 -1536 1536 1792"><path fill="#fff" transform="scale(1,-1)" d="M1468 1156Q1496 1128 1516.0 1080.0Q1536 1032 1536 992V-160Q1536 -200 1508.0 -228.0Q1480 -256 1440 -256H96Q56 -256 28.0 -228.0Q0 -200 0 -160V1440Q0 1480 28.0 1508.0Q56 1536 96 1536H992Q1032 1536 1080.0 1516.0Q1128 1496 1156 1468ZM1024 1400V1024H1400Q1390 1053 1378 1065L1065 1378Q1053 1390 1024 1400ZM1408 -128V896H992Q952 896 924.0 924.0Q896 952 896 992V1408H128V-128ZM894 465Q927 439 978 409Q1037 416 1095 416Q1242 416 1272 367Q1288 345 1274 315Q1274 314 1273.0 313.0Q1272 312 1271 311V310Q1265 272 1200 272Q1152 272 1085.0 292.0Q1018 312 955 345Q734 321 563 262Q410 0 321 0Q306 0 293 7L269 19Q268 20 263 24Q253 34 257 60Q266 100 313.0 151.5Q360 203 445 248Q459 257 468 242Q470 240 470 238Q522 323 577 435Q645 571 681 697Q657 779 650.5 856.5Q644 934 657 984Q668 1024 699 1024H720H721Q744 1024 756 1009Q774 988 765 941Q763 935 761 933Q762 930 762 925V895Q760 772 748 703Q803 539 894 465ZM318 54Q370 78 455 212Q404 172 367.5 128.0Q331 84 318 54ZM716 974Q701 932 714 842Q715 849 721 886Q721 889 728 929Q729 933 732 937Q731 938 731 939Q730 941 730 942Q729 964 717 978Q717 977 716 976ZM592 313Q727 367 876 394Q874 395 863.0 403.5Q852 412 847 417Q771 484 720 593Q693 507 637 396Q607 340 592 313ZM1238 329Q1214 353 1098 353Q1174 325 1222 325Q1236 325 1240 326Q1240 327 1238 329Z"/></svg>
<div class="b" style="left:1614.8px;top:650.71px;width:28.2px;height:24px;border-radius:3px;background:#f8b44c"></div>
<svg class="i" style="left:1622.90px;top:658.11px" width="12.00" height="9.43" viewBox="0 -1280 1792 1408"><path fill="#fff" transform="scale(1,-1)" d="M1792 826V32Q1792 -34 1745.0 -81.0Q1698 -128 1632 -128H160Q94 -128 47.0 -81.0Q0 -34 0 32V826Q44 777 101 739Q463 493 598 394Q655 352 690.5 328.5Q726 305 785.0 280.5Q844 256 895 256H896H897Q948 256 1007.0 280.5Q1066 305 1101.5 328.5Q1137 352 1194 394Q1364 517 1692 739Q1749 778 1792 826ZM1792 1120Q1792 1041 1743.0 969.0Q1694 897 1621 846Q1245 585 1153 521Q1143 514 1110.5 490.5Q1078 467 1056.5 452.5Q1035 438 1004.5 420.0Q974 402 947.0 393.0Q920 384 897 384H896H895Q872 384 845.0 393.0Q818 402 787.5 420.0Q757 438 735.5 452.5Q714 467 681.5 490.5Q649 514 639 521Q548 585 377.0 703.5Q206 822 172 846Q110 888 55.0 961.5Q0 1035 0 1098Q0 1176 41.5 1228.0Q83 1280 160 1280H1632Q1697 1280 1744.5 1233.0Q1792 1186 1792 1120Z"/></svg>
<div class="b" style="left:79px;top:683.25px;width:1578px;height:43.5375px;background:#f9f9f9;"></div>
<div class="b" style="left:79px;top:683.25px;width:1578px;height:1px;background:#ededed;"></div>
<svg class="i" style="left:88px;top:696.25px" width="22" height="22" viewBox="0 0 22 22"><rect x="1.35" y="1.25" width="18.3" height="18.3" fill="#fff" stroke="#d6d6d6" stroke-width="2.5"/></svg>
<span class="t " style="left:133.12px;top:695.00px;font-size:14.53px;color:#555;letter-spacing:-0.137px;">Garage24 Demo</span>
<span class="t " style="left:260.18px;top:695.00px;font-size:14.53px;color:#555;letter-spacing:-0.201px;">Papi Ukaj</span>
<span class="t " style="left:411.45px;top:695.00px;font-size:14.53px;color:#555;letter-spacing:0.272px;">2. Mahnung | 25</span>
<span class="t " style="left:596.68px;top:695.00px;font-size:14.53px;color:#555;letter-spacing:-0.125px;">15.00</span>
<span class="t " style="left:721.18px;top:695.00px;font-size:14.53px;color:#555;letter-spacing:-0.068px;">128</span>
<span class="t " style="left:783.96px;top:695.00px;font-size:14.53px;color:#555;letter-spacing:-0.085px;">46.85 / 140.50</span>
<span class="t " style="left:920.55px;top:695.00px;font-size:14.53px;color:#555;letter-spacing:-0.155px;">20.05.2025</span>
<span class="t " style="left:1060.18px;top:695.00px;font-size:14.53px;color:#555;letter-spacing:-0.181px;">14.06.2025</span>
<span class="t " style="left:1204.88px;top:695.00px;font-size:14.53px;color:#555;letter-spacing:-0.156px;">Per E-Mail gesendet 21.05.2025</span>
<div class="b" style="left:1436px;top:693.65px;width:143px;height:24px;border-radius:3px;background:#3a7bd5"></div>
<svg class="i" style="left:1444.20px;top:700.75px" width="10.29" height="10.29" viewBox="0 -1408 1536 1536"><path fill="#fff" transform="scale(1,-1)" d="M1511 480Q1511 475 1510 473Q1446 205 1242.0 38.5Q1038 -128 764 -128Q618 -128 481.5 -73.0Q345 -18 238 84L109 -45Q90 -64 64.0 -64.0Q38 -64 19.0 -45.0Q0 -26 0 0V448Q0 474 19.0 493.0Q38 512 64 512H512Q538 512 557.0 493.0Q576 474 576.0 448.0Q576 422 557 403L420 266Q491 200 581.0 164.0Q671 128 768 128Q902 128 1018.0 193.0Q1134 258 1204 372Q1215 389 1257 489Q1265 512 1287 512H1479Q1492 512 1501.5 502.5Q1511 493 1511 480ZM1536 1280V832Q1536 806 1517.0 787.0Q1498 768 1472 768H1024Q998 768 979.0 787.0Q960 806 960.0 832.0Q960 858 979 877L1117 1015Q969 1152 768 1152Q634 1152 518.0 1087.0Q402 1022 332 908Q321 891 279 791Q271 768 249 768H50Q37 768 27.5 777.5Q18 787 18 800V807Q83 1075 288.0 1241.5Q493 1408 768 1408Q914 1408 1052.0 1352.5Q1190 1297 1297 1196L1427 1325Q1446 1344 1472.0 1344.0Q1498 1344 1517.0 1325.0Q1536 1306 1536 1280Z"/></svg>
<span class="t " style="left:1459.84px;top:696.00px;font-size:11.65px;color:#fff;letter-spacing:0.333px;-webkit-text-stroke:0.45px #fff;">PDF neu generieren</span>
<div class="b" style="left:1584px;top:693.65px;width:27px;height:24px;border-radius:3px;background:#20a4d1"></div>
<svg class="i" style="left:1592.90px;top:699.65px" width="10.29" height="12.00" viewBox="0 -1536 1536 1792"><path fill="#fff" transform="scale(1,-1)" d="M1468 1156Q1496 1128 1516.0 1080.0Q1536 1032 1536 992V-160Q1536 -200 1508.0 -228.0Q1480 -256 1440 -256H96Q56 -256 28.0 -228.0Q0 -200 0 -160V1440Q0 1480 28.0 1508.0Q56 1536 96 1536H992Q1032 1536 1080.0 1516.0Q1128 1496 1156 1468ZM1024 1400V1024H1400Q1390 1053 1378 1065L1065 1378Q1053 1390 1024 1400ZM1408 -128V896H992Q952 896 924.0 924.0Q896 952 896 992V1408H128V-128ZM894 465Q927 439 978 409Q1037 416 1095 416Q1242 416 1272 367Q1288 345 1274 315Q1274 314 1273.0 313.0Q1272 312 1271 311V310Q1265 272 1200 272Q1152 272 1085.0 292.0Q1018 312 955 345Q734 321 563 262Q410 0 321 0Q306 0 293 7L269 19Q268 20 263 24Q253 34 257 60Q266 100 313.0 151.5Q360 203 445 248Q459 257 468 242Q470 240 470 238Q522 323 577 435Q645 571 681 697Q657 779 650.5 856.5Q644 934 657 984Q668 1024 699 1024H720H721Q744 1024 756 1009Q774 988 765 941Q763 935 761 933Q762 930 762 925V895Q760 772 748 703Q803 539 894 465ZM318 54Q370 78 455 212Q404 172 367.5 128.0Q331 84 318 54ZM716 974Q701 932 714 842Q715 849 721 886Q721 889 728 929Q729 933 732 937Q731 938 731 939Q730 941 730 942Q729 964 717 978Q717 977 716 976ZM592 313Q727 367 876 394Q874 395 863.0 403.5Q852 412 847 417Q771 484 720 593Q693 507 637 396Q607 340 592 313ZM1238 329Q1214 353 1098 353Q1174 325 1222 325Q1236 325 1240 326Q1240 327 1238 329Z"/></svg>
<div class="b" style="left:1614.8px;top:693.65px;width:28.2px;height:24px;border-radius:3px;background:#f8b44c"></div>
<svg class="i" style="left:1622.90px;top:701.05px" width="12.00" height="9.43" viewBox="0 -1280 1792 1408"><path fill="#fff" transform="scale(1,-1)" d="M1792 826V32Q1792 -34 1745.0 -81.0Q1698 -128 1632 -128H160Q94 -128 47.0 -81.0Q0 -34 0 32V826Q44 777 101 739Q463 493 598 394Q655 352 690.5 328.5Q726 305 785.0 280.5Q844 256 895 256H896H897Q948 256 1007.0 280.5Q1066 305 1101.5 328.5Q1137 352 1194 394Q1364 517 1692 739Q1749 778 1792 826ZM1792 1120Q1792 1041 1743.0 969.0Q1694 897 1621 846Q1245 585 1153 521Q1143 514 1110.5 490.5Q1078 467 1056.5 452.5Q1035 438 1004.5 420.0Q974 402 947.0 393.0Q920 384 897 384H896H895Q872 384 845.0 393.0Q818 402 787.5 420.0Q757 438 735.5 452.5Q714 467 681.5 490.5Q649 514 639 521Q548 585 377.0 703.5Q206 822 172 846Q110 888 55.0 961.5Q0 1035 0 1098Q0 1176 41.5 1228.0Q83 1280 160 1280H1632Q1697 1280 1744.5 1233.0Q1792 1186 1792 1120Z"/></svg>
<div class="b" style="left:79px;top:726.19px;width:1578px;height:1px;background:#ededed;"></div>
<svg class="i" style="left:88px;top:739.19px" width="22" height="22" viewBox="0 0 22 22"><rect x="1.35" y="1.25" width="18.3" height="18.3" fill="#fff" stroke="#d6d6d6" stroke-width="2.5"/></svg>
<span class="t " style="left:133.12px;top:738.00px;font-size:14.53px;color:#555;letter-spacing:-0.137px;">Garage24 Demo</span>
<span class="t " style="left:260.18px;top:738.00px;font-size:14.53px;color:#555;letter-spacing:0.271px;">Bettina Testmüller</span>
<span class="t " style="left:411.60px;top:738.00px;font-size:14.53px;color:#555;letter-spacing:0.257px;">Zahlungserinnerung | 10</span>
<span class="t " style="left:596.63px;top:738.00px;font-size:14.53px;color:#555;letter-spacing:-0.141px;">0.00</span>
<span class="t " style="left:721.18px;top:738.00px;font-size:14.53px;color:#555;letter-spacing:-0.068px;">170</span>
<span class="t " style="left:784.33px;top:738.00px;font-size:14.53px;color:#555;letter-spacing:-0.113px;">51.30 / 256.50</span>
<span class="t " style="left:920.73px;top:738.00px;font-size:14.53px;color:#555;letter-spacing:-0.175px;">07.05.2025</span>
<span class="t " style="left:1060.18px;top:738.00px;font-size:14.53px;color:#555;letter-spacing:-0.181px;">17.05.2025</span>
<span class="t " style="left:1204.88px;top:738.00px;font-size:14.53px;color:#555;letter-spacing:-0.208px;">Per SMS versandt 09.05.2025</span>
<div class="b" style="left:1436px;top:736.59px;width:143px;height:24px;border-radius:3px;background:#3a7bd5"></div>
<svg class="i" style="left:1444.20px;top:743.69px" width="10.29" height="10.29" viewBox="0 -1408 1536 1536"><path fill="#fff" transform="scale(1,-1)" d="M1511 480Q1511 475 1510 473Q1446 205 1242.0 38.5Q1038 -128 764 -128Q618 -128 481.5 -73.0Q345 -18 238 84L109 -45Q90 -64 64.0 -64.0Q38 -64 19.0 -45.0Q0 -26 0 0V448Q0 474 19.0 493.0Q38 512 64 512H512Q538 512 557.0 493.0Q576 474 576.0 448.0Q576 422 557 403L420 266Q491 200 581.0 164.0Q671 128 768 128Q902 128 1018.0 193.0Q1134 258 1204 372Q1215 389 1257 489Q1265 512 1287 512H1479Q1492 512 1501.5 502.5Q1511 493 1511 480ZM1536 1280V832Q1536 806 1517.0 787.0Q1498 768 1472 768H1024Q998 768 979.0 787.0Q960 806 960.0 832.0Q960 858 979 877L1117 1015Q969 1152 768 1152Q634 1152 518.0 1087.0Q402 1022 332 908Q321 891 279 791Q271 768 249 768H50Q37 768 27.5 777.5Q18 787 18 800V807Q83 1075 288.0 1241.5Q493 1408 768 1408Q914 1408 1052.0 1352.5Q1190 1297 1297 1196L1427 1325Q1446 1344 1472.0 1344.0Q1498 1344 1517.0 1325.0Q1536 1306 1536 1280Z"/></svg>
<span class="t " style="left:1459.84px;top:739.00px;font-size:11.65px;color:#fff;letter-spacing:0.333px;-webkit-text-stroke:0.45px #fff;">PDF neu generieren</span>
<div class="b" style="left:1584px;top:736.59px;width:27px;height:24px;border-radius:3px;background:#20a4d1"></div>
<svg class="i" style="left:1592.90px;top:742.59px" width="10.29" height="12.00" viewBox="0 -1536 1536 1792"><path fill="#fff" transform="scale(1,-1)" d="M1468 1156Q1496 1128 1516.0 1080.0Q1536 1032 1536 992V-160Q1536 -200 1508.0 -228.0Q1480 -256 1440 -256H96Q56 -256 28.0 -228.0Q0 -200 0 -160V1440Q0 1480 28.0 1508.0Q56 1536 96 1536H992Q1032 1536 1080.0 1516.0Q1128 1496 1156 1468ZM1024 1400V1024H1400Q1390 1053 1378 1065L1065 1378Q1053 1390 1024 1400ZM1408 -128V896H992Q952 896 924.0 924.0Q896 952 896 992V1408H128V-128ZM894 465Q927 439 978 409Q1037 416 1095 416Q1242 416 1272 367Q1288 345 1274 315Q1274 314 1273.0 313.0Q1272 312 1271 311V310Q1265 272 1200 272Q1152 272 1085.0 292.0Q1018 312 955 345Q734 321 563 262Q410 0 321 0Q306 0 293 7L269 19Q268 20 263 24Q253 34 257 60Q266 100 313.0 151.5Q360 203 445 248Q459 257 468 242Q470 240 470 238Q522 323 577 435Q645 571 681 697Q657 779 650.5 856.5Q644 934 657 984Q668 1024 699 1024H720H721Q744 1024 756 1009Q774 988 765 941Q763 935 761 933Q762 930 762 925V895Q760 772 748 703Q803 539 894 465ZM318 54Q370 78 455 212Q404 172 367.5 128.0Q331 84 318 54ZM716 974Q701 932 714 842Q715 849 721 886Q721 889 728 929Q729 933 732 937Q731 938 731 939Q730 941 730 942Q729 964 717 978Q717 977 716 976ZM592 313Q727 367 876 394Q874 395 863.0 403.5Q852 412 847 417Q771 484 720 593Q693 507 637 396Q607 340 592 313ZM1238 329Q1214 353 1098 353Q1174 325 1222 325Q1236 325 1240 326Q1240 327 1238 329Z"/></svg>
<div class="b" style="left:1614.8px;top:736.59px;width:28.2px;height:24px;border-radius:3px;background:#f8b44c"></div>
<svg class="i" style="left:1622.90px;top:743.99px" width="12.00" height="9.43" viewBox="0 -1280 1792 1408"><path fill="#fff" transform="scale(1,-1)" d="M1792 826V32Q1792 -34 1745.0 -81.0Q1698 -128 1632 -128H160Q94 -128 47.0 -81.0Q0 -34 0 32V826Q44 777 101 739Q463 493 598 394Q655 352 690.5 328.5Q726 305 785.0 280.5Q844 256 895 256H896H897Q948 256 1007.0 280.5Q1066 305 1101.5 328.5Q1137 352 1194 394Q1364 517 1692 739Q1749 778 1792 826ZM1792 1120Q1792 1041 1743.0 969.0Q1694 897 1621 846Q1245 585 1153 521Q1143 514 1110.5 490.5Q1078 467 1056.5 452.5Q1035 438 1004.5 420.0Q974 402 947.0 393.0Q920 384 897 384H896H895Q872 384 845.0 393.0Q818 402 787.5 420.0Q757 438 735.5 452.5Q714 467 681.5 490.5Q649 514 639 521Q548 585 377.0 703.5Q206 822 172 846Q110 888 55.0 961.5Q0 1035 0 1098Q0 1176 41.5 1228.0Q83 1280 160 1280H1632Q1697 1280 1744.5 1233.0Q1792 1186 1792 1120Z"/></svg>
<div class="b" style="left:79px;top:769.12px;width:1578px;height:43.5375px;background:#f9f9f9;"></div>
<div class="b" style="left:79px;top:769.12px;width:1578px;height:1px;background:#ededed;"></div>
<svg class="i" style="left:88px;top:782.12px" width="22" height="22" viewBox="0 0 22 22"><rect x="1.35" y="1.25" width="18.3" height="18.3" fill="#fff" stroke="#d6d6d6" stroke-width="2.5"/></svg>
<span class="t " style="left:133.12px;top:781.00px;font-size:14.53px;color:#555;letter-spacing:-0.137px;">Garage24 Demo</span>
<span class="t " style="left:260.18px;top:781.00px;font-size:14.53px;color:#555;letter-spacing:0.271px;">Bettina Testmüller</span>
<span class="t " style="left:411.60px;top:781.00px;font-size:14.53px;color:#555;letter-spacing:0.257px;">Zahlungserinnerung | 10</span>
<span class="t " style="left:596.63px;top:781.00px;font-size:14.53px;color:#555;letter-spacing:-0.141px;">0.00</span>
<span class="t " style="left:721.18px;top:781.00px;font-size:14.53px;color:#555;letter-spacing:-0.068px;">170</span>
<span class="t " style="left:784.33px;top:781.00px;font-size:14.53px;color:#555;letter-spacing:-0.113px;">51.30 / 256.50</span>
<span class="t " style="left:920.69px;top:781.00px;font-size:14.53px;color:#555;letter-spacing:-0.171px;">30.04.2025</span>
<span class="t " style="left:1060.18px;top:781.00px;font-size:14.53px;color:#555;letter-spacing:-0.181px;">10.05.2025</span>
<span class="t " style="left:1204.88px;top:781.00px;font-size:14.53px;color:#555;letter-spacing:0.061px;">Nicht gesendet</span>
<div class="b" style="left:1436px;top:779.52px;width:143px;height:24px;border-radius:3px;background:#3a7bd5"></div>
<svg class="i" style="left:1444.20px;top:786.62px" width="10.29" height="10.29" viewBox="0 -1408 1536 1536"><path fill="#fff" transform="scale(1,-1)" d="M1511 480Q1511 475 1510 473Q1446 205 1242.0 38.5Q1038 -128 764 -128Q618 -128 481.5 -73.0Q345 -18 238 84L109 -45Q90 -64 64.0 -64.0Q38 -64 19.0 -45.0Q0 -26 0 0V448Q0 474 19.0 493.0Q38 512 64 512H512Q538 512 557.0 493.0Q576 474 576.0 448.0Q576 422 557 403L420 266Q491 200 581.0 164.0Q671 128 768 128Q902 128 1018.0 193.0Q1134 258 1204 372Q1215 389 1257 489Q1265 512 1287 512H1479Q1492 512 1501.5 502.5Q1511 493 1511 480ZM1536 1280V832Q1536 806 1517.0 787.0Q1498 768 1472 768H1024Q998 768 979.0 787.0Q960 806 960.0 832.0Q960 858 979 877L1117 1015Q969 1152 768 1152Q634 1152 518.0 1087.0Q402 1022 332 908Q321 891 279 791Q271 768 249 768H50Q37 768 27.5 777.5Q18 787 18 800V807Q83 1075 288.0 1241.5Q493 1408 768 1408Q914 1408 1052.0 1352.5Q1190 1297 1297 1196L1427 1325Q1446 1344 1472.0 1344.0Q1498 1344 1517.0 1325.0Q1536 1306 1536 1280Z"/></svg>
<span class="t " style="left:1459.84px;top:782.00px;font-size:11.65px;color:#fff;letter-spacing:0.333px;-webkit-text-stroke:0.45px #fff;">PDF neu generieren</span>
<div class="b" style="left:1584px;top:779.52px;width:27px;height:24px;border-radius:3px;background:#20a4d1"></div>
<svg class="i" style="left:1592.90px;top:785.52px" width="10.29" height="12.00" viewBox="0 -1536 1536 1792"><path fill="#fff" transform="scale(1,-1)" d="M1468 1156Q1496 1128 1516.0 1080.0Q1536 1032 1536 992V-160Q1536 -200 1508.0 -228.0Q1480 -256 1440 -256H96Q56 -256 28.0 -228.0Q0 -200 0 -160V1440Q0 1480 28.0 1508.0Q56 1536 96 1536H992Q1032 1536 1080.0 1516.0Q1128 1496 1156 1468ZM1024 1400V1024H1400Q1390 1053 1378 1065L1065 1378Q1053 1390 1024 1400ZM1408 -128V896H992Q952 896 924.0 924.0Q896 952 896 992V1408H128V-128ZM894 465Q927 439 978 409Q1037 416 1095 416Q1242 416 1272 367Q1288 345 1274 315Q1274 314 1273.0 313.0Q1272 312 1271 311V310Q1265 272 1200 272Q1152 272 1085.0 292.0Q1018 312 955 345Q734 321 563 262Q410 0 321 0Q306 0 293 7L269 19Q268 20 263 24Q253 34 257 60Q266 100 313.0 151.5Q360 203 445 248Q459 257 468 242Q470 240 470 238Q522 323 577 435Q645 571 681 697Q657 779 650.5 856.5Q644 934 657 984Q668 1024 699 1024H720H721Q744 1024 756 1009Q774 988 765 941Q763 935 761 933Q762 930 762 925V895Q760 772 748 703Q803 539 894 465ZM318 54Q370 78 455 212Q404 172 367.5 128.0Q331 84 318 54ZM716 974Q701 932 714 842Q715 849 721 886Q721 889 728 929Q729 933 732 937Q731 938 731 939Q730 941 730 942Q729 964 717 978Q717 977 716 976ZM592 313Q727 367 876 394Q874 395 863.0 403.5Q852 412 847 417Q771 484 720 593Q693 507 637 396Q607 340 592 313ZM1238 329Q1214 353 1098 353Q1174 325 1222 325Q1236 325 1240 326Q1240 327 1238 329Z"/></svg>
<div class="b" style="left:1614.8px;top:779.52px;width:28.2px;height:24px;border-radius:3px;background:#f8b44c"></div>
<svg class="i" style="left:1622.90px;top:786.92px" width="12.00" height="9.43" viewBox="0 -1280 1792 1408"><path fill="#fff" transform="scale(1,-1)" d="M1792 826V32Q1792 -34 1745.0 -81.0Q1698 -128 1632 -128H160Q94 -128 47.0 -81.0Q0 -34 0 32V826Q44 777 101 739Q463 493 598 394Q655 352 690.5 328.5Q726 305 785.0 280.5Q844 256 895 256H896H897Q948 256 1007.0 280.5Q1066 305 1101.5 328.5Q1137 352 1194 394Q1364 517 1692 739Q1749 778 1792 826ZM1792 1120Q1792 1041 1743.0 969.0Q1694 897 1621 846Q1245 585 1153 521Q1143 514 1110.5 490.5Q1078 467 1056.5 452.5Q1035 438 1004.5 420.0Q974 402 947.0 393.0Q920 384 897 384H896H895Q872 384 845.0 393.0Q818 402 787.5 420.0Q757 438 735.5 452.5Q714 467 681.5 490.5Q649 514 639 521Q548 585 377.0 703.5Q206 822 172 846Q110 888 55.0 961.5Q0 1035 0 1098Q0 1176 41.5 1228.0Q83 1280 160 1280H1632Q1697 1280 1744.5 1233.0Q1792 1186 1792 1120Z"/></svg>
<div class="b" style="left:79px;top:812.06px;width:1578px;height:1px;background:#ededed;"></div>
<svg class="i" style="left:88px;top:825.06px" width="22" height="22" viewBox="0 0 22 22"><rect x="1.35" y="1.25" width="18.3" height="18.3" fill="#fff" stroke="#d6d6d6" stroke-width="2.5"/></svg>
<span class="t " style="left:133.12px;top:824.00px;font-size:14.53px;color:#555;letter-spacing:-0.137px;">Garage24 Demo</span>
<span class="t " style="left:260.18px;top:824.00px;font-size:14.53px;color:#555;letter-spacing:0.271px;">Bettina Testmüller</span>
<span class="t " style="left:411.68px;top:824.00px;font-size:14.53px;color:#555;letter-spacing:0.344px;">Betreibung | 50</span>
<span class="t " style="left:596.83px;top:824.00px;font-size:14.53px;color:#555;letter-spacing:-0.125px;">50.00</span>
<span class="t " style="left:721.18px;top:824.00px;font-size:14.53px;color:#555;letter-spacing:-0.068px;">126</span>
<span class="t " style="left:784.18px;top:824.00px;font-size:14.53px;color:#555;letter-spacing:-0.095px;">1070.50 / 4605.80</span>
<span class="t " style="left:920.55px;top:824.00px;font-size:14.53px;color:#555;letter-spacing:-0.155px;">24.04.2025</span>
<span class="t " style="left:1060.18px;top:824.00px;font-size:14.53px;color:#555;letter-spacing:-0.181px;">13.06.2025</span>
<span class="t " style="left:1204.88px;top:824.00px;font-size:14.53px;color:#555;letter-spacing:0.061px;">Nicht gesendet</span>
<div class="b" style="left:1436px;top:822.46px;width:143px;height:24px;border-radius:3px;background:#3a7bd5"></div>
<svg class="i" style="left:1444.20px;top:829.56px" width="10.29" height="10.29" viewBox="0 -1408 1536 1536"><path fill="#fff" transform="scale(1,-1)" d="M1511 480Q1511 475 1510 473Q1446 205 1242.0 38.5Q1038 -128 764 -128Q618 -128 481.5 -73.0Q345 -18 238 84L109 -45Q90 -64 64.0 -64.0Q38 -64 19.0 -45.0Q0 -26 0 0V448Q0 474 19.0 493.0Q38 512 64 512H512Q538 512 557.0 493.0Q576 474 576.0 448.0Q576 422 557 403L420 266Q491 200 581.0 164.0Q671 128 768 128Q902 128 1018.0 193.0Q1134 258 1204 372Q1215 389 1257 489Q1265 512 1287 512H1479Q1492 512 1501.5 502.5Q1511 493 1511 480ZM1536 1280V832Q1536 806 1517.0 787.0Q1498 768 1472 768H1024Q998 768 979.0 787.0Q960 806 960.0 832.0Q960 858 979 877L1117 1015Q969 1152 768 1152Q634 1152 518.0 1087.0Q402 1022 332 908Q321 891 279 791Q271 768 249 768H50Q37 768 27.5 777.5Q18 787 18 800V807Q83 1075 288.0 1241.5Q493 1408 768 1408Q914 1408 1052.0 1352.5Q1190 1297 1297 1196L1427 1325Q1446 1344 1472.0 1344.0Q1498 1344 1517.0 1325.0Q1536 1306 1536 1280Z"/></svg>
<span class="t " style="left:1459.84px;top:825.00px;font-size:11.65px;color:#fff;letter-spacing:0.333px;-webkit-text-stroke:0.45px #fff;">PDF neu generieren</span>
<div class="b" style="left:1584px;top:822.46px;width:27px;height:24px;border-radius:3px;background:#20a4d1"></div>
<svg class="i" style="left:1592.90px;top:828.46px" width="10.29" height="12.00" viewBox="0 -1536 1536 1792"><path fill="#fff" transform="scale(1,-1)" d="M1468 1156Q1496 1128 1516.0 1080.0Q1536 1032 1536 992V-160Q1536 -200 1508.0 -228.0Q1480 -256 1440 -256H96Q56 -256 28.0 -228.0Q0 -200 0 -160V1440Q0 1480 28.0 1508.0Q56 1536 96 1536H992Q1032 1536 1080.0 1516.0Q1128 1496 1156 1468ZM1024 1400V1024H1400Q1390 1053 1378 1065L1065 1378Q1053 1390 1024 1400ZM1408 -128V896H992Q952 896 924.0 924.0Q896 952 896 992V1408H128V-128ZM894 465Q927 439 978 409Q1037 416 1095 416Q1242 416 1272 367Q1288 345 1274 315Q1274 314 1273.0 313.0Q1272 312 1271 311V310Q1265 272 1200 272Q1152 272 1085.0 292.0Q1018 312 955 345Q734 321 563 262Q410 0 321 0Q306 0 293 7L269 19Q268 20 263 24Q253 34 257 60Q266 100 313.0 151.5Q360 203 445 248Q459 257 468 242Q470 240 470 238Q522 323 577 435Q645 571 681 697Q657 779 650.5 856.5Q644 934 657 984Q668 1024 699 1024H720H721Q744 1024 756 1009Q774 988 765 941Q763 935 761 933Q762 930 762 925V895Q760 772 748 703Q803 539 894 465ZM318 54Q370 78 455 212Q404 172 367.5 128.0Q331 84 318 54ZM716 974Q701 932 714 842Q715 849 721 886Q721 889 728 929Q729 933 732 937Q731 938 731 939Q730 941 730 942Q729 964 717 978Q717 977 716 976ZM592 313Q727 367 876 394Q874 395 863.0 403.5Q852 412 847 417Q771 484 720 593Q693 507 637 396Q607 340 592 313ZM1238 329Q1214 353 1098 353Q1174 325 1222 325Q1236 325 1240 326Q1240 327 1238 329Z"/></svg>
<div class="b" style="left:1614.8px;top:822.46px;width:28.2px;height:24px;border-radius:3px;background:#f8b44c"></div>
<svg class="i" style="left:1622.90px;top:829.86px" width="12.00" height="9.43" viewBox="0 -1280 1792 1408"><path fill="#fff" transform="scale(1,-1)" d="M1792 826V32Q1792 -34 1745.0 -81.0Q1698 -128 1632 -128H160Q94 -128 47.0 -81.0Q0 -34 0 32V826Q44 777 101 739Q463 493 598 394Q655 352 690.5 328.5Q726 305 785.0 280.5Q844 256 895 256H896H897Q948 256 1007.0 280.5Q1066 305 1101.5 328.5Q1137 352 1194 394Q1364 517 1692 739Q1749 778 1792 826ZM1792 1120Q1792 1041 1743.0 969.0Q1694 897 1621 846Q1245 585 1153 521Q1143 514 1110.5 490.5Q1078 467 1056.5 452.5Q1035 438 1004.5 420.0Q974 402 947.0 393.0Q920 384 897 384H896H895Q872 384 845.0 393.0Q818 402 787.5 420.0Q757 438 735.5 452.5Q714 467 681.5 490.5Q649 514 639 521Q548 585 377.0 703.5Q206 822 172 846Q110 888 55.0 961.5Q0 1035 0 1098Q0 1176 41.5 1228.0Q83 1280 160 1280H1632Q1697 1280 1744.5 1233.0Q1792 1186 1792 1120Z"/></svg>
<div class="b" style="left:79px;top:855.00px;width:1578px;height:43.5375px;background:#f9f9f9;"></div>
<div class="b" style="left:79px;top:855.00px;width:1578px;height:1px;background:#ededed;"></div>
<svg class="i" style="left:88px;top:868.0px" width="22" height="22" viewBox="0 0 22 22"><rect x="1.35" y="1.25" width="18.3" height="18.3" fill="#fff" stroke="#d6d6d6" stroke-width="2.5"/></svg>
<span class="t " style="left:133.12px;top:867.00px;font-size:14.53px;color:#555;letter-spacing:-0.137px;">Garage24 Demo</span>
<span class="t " style="left:260.18px;top:867.00px;font-size:14.53px;color:#555;letter-spacing:-0.201px;">Papi Ukaj</span>
<span class="t " style="left:411.68px;top:867.00px;font-size:14.53px;color:#555;letter-spacing:0.400px;">Mahnung | 25</span>
<span class="t " style="left:596.68px;top:867.00px;font-size:14.53px;color:#555;letter-spacing:-0.125px;">10.00</span>
<span class="t " style="left:721.18px;top:867.00px;font-size:14.53px;color:#555;letter-spacing:-0.068px;">128</span>
<span class="t " style="left:783.96px;top:867.00px;font-size:14.53px;color:#555;letter-spacing:-0.085px;">46.80 / 140.50</span>
<span class="t " style="left:920.73px;top:867.00px;font-size:14.53px;color:#555;letter-spacing:-0.175px;">09.04.2025</span>
<span class="t " style="left:1060.13px;top:867.00px;font-size:14.53px;color:#555;letter-spacing:-0.175px;">04.05.2025</span>
<span class="t " style="left:1204.88px;top:867.00px;font-size:14.53px;color:#555;letter-spacing:-0.156px;">Per E-Mail gesendet 09.05.2025</span>
<div class="b" style="left:1436px;top:865.40px;width:143px;height:24px;border-radius:3px;background:#3a7bd5"></div>
<svg class="i" style="left:1444.20px;top:872.50px" width="10.29" height="10.29" viewBox="0 -1408 1536 1536"><path fill="#fff" transform="scale(1,-1)" d="M1511 480Q1511 475 1510 473Q1446 205 1242.0 38.5Q1038 -128 764 -128Q618 -128 481.5 -73.0Q345 -18 238 84L109 -45Q90 -64 64.0 -64.0Q38 -64 19.0 -45.0Q0 -26 0 0V448Q0 474 19.0 493.0Q38 512 64 512H512Q538 512 557.0 493.0Q576 474 576.0 448.0Q576 422 557 403L420 266Q491 200 581.0 164.0Q671 128 768 128Q902 128 1018.0 193.0Q1134 258 1204 372Q1215 389 1257 489Q1265 512 1287 512H1479Q1492 512 1501.5 502.5Q1511 493 1511 480ZM1536 1280V832Q1536 806 1517.0 787.0Q1498 768 1472 768H1024Q998 768 979.0 787.0Q960 806 960.0 832.0Q960 858 979 877L1117 1015Q969 1152 768 1152Q634 1152 518.0 1087.0Q402 1022 332 908Q321 891 279 791Q271 768 249 768H50Q37 768 27.5 777.5Q18 787 18 800V807Q83 1075 288.0 1241.5Q493 1408 768 1408Q914 1408 1052.0 1352.5Q1190 1297 1297 1196L1427 1325Q1446 1344 1472.0 1344.0Q1498 1344 1517.0 1325.0Q1536 1306 1536 1280Z"/></svg>
<span class="t " style="left:1459.84px;top:868.00px;font-size:11.65px;color:#fff;letter-spacing:0.333px;-webkit-text-stroke:0.45px #fff;">PDF neu generieren</span>
<div class="b" style="left:1584px;top:865.40px;width:27px;height:24px;border-radius:3px;background:#20a4d1"></div>
<svg class="i" style="left:1592.90px;top:871.40px" width="10.29" height="12.00" viewBox="0 -1536 1536 1792"><path fill="#fff" transform="scale(1,-1)" d="M1468 1156Q1496 1128 1516.0 1080.0Q1536 1032 1536 992V-160Q1536 -200 1508.0 -228.0Q1480 -256 1440 -256H96Q56 -256 28.0 -228.0Q0 -200 0 -160V1440Q0 1480 28.0 1508.0Q56 1536 96 1536H992Q1032 1536 1080.0 1516.0Q1128 1496 1156 1468ZM1024 1400V1024H1400Q1390 1053 1378 1065L1065 1378Q1053 1390 1024 1400ZM1408 -128V896H992Q952 896 924.0 924.0Q896 952 896 992V1408H128V-128ZM894 465Q927 439 978 409Q1037 416 1095 416Q1242 416 1272 367Q1288 345 1274 315Q1274 314 1273.0 313.0Q1272 312 1271 311V310Q1265 272 1200 272Q1152 272 1085.0 292.0Q1018 312 955 345Q734 321 563 262Q410 0 321 0Q306 0 293 7L269 19Q268 20 263 24Q253 34 257 60Q266 100 313.0 151.5Q360 203 445 248Q459 257 468 242Q470 240 470 238Q522 323 577 435Q645 571 681 697Q657 779 650.5 856.5Q644 934 657 984Q668 1024 699 1024H720H721Q744 1024 756 1009Q774 988 765 941Q763 935 761 933Q762 930 762 925V895Q760 772 748 703Q803 539 894 465ZM318 54Q370 78 455 212Q404 172 367.5 128.0Q331 84 318 54ZM716 974Q701 932 714 842Q715 849 721 886Q721 889 728 929Q729 933 732 937Q731 938 731 939Q730 941 730 942Q729 964 717 978Q717 977 716 976ZM592 313Q727 367 876 394Q874 395 863.0 403.5Q852 412 847 417Q771 484 720 593Q693 507 637 396Q607 340 592 313ZM1238 329Q1214 353 1098 353Q1174 325 1222 325Q1236 325 1240 326Q1240 327 1238 329Z"/></svg>
<div class="b" style="left:1614.8px;top:865.40px;width:28.2px;height:24px;border-radius:3px;background:#f8b44c"></div>
<svg class="i" style="left:1622.90px;top:872.80px" width="12.00" height="9.43" viewBox="0 -1280 1792 1408"><path fill="#fff" transform="scale(1,-1)" d="M1792 826V32Q1792 -34 1745.0 -81.0Q1698 -128 1632 -128H160Q94 -128 47.0 -81.0Q0 -34 0 32V826Q44 777 101 739Q463 493 598 394Q655 352 690.5 328.5Q726 305 785.0 280.5Q844 256 895 256H896H897Q948 256 1007.0 280.5Q1066 305 1101.5 328.5Q1137 352 1194 394Q1364 517 1692 739Q1749 778 1792 826ZM1792 1120Q1792 1041 1743.0 969.0Q1694 897 1621 846Q1245 585 1153 521Q1143 514 1110.5 490.5Q1078 467 1056.5 452.5Q1035 438 1004.5 420.0Q974 402 947.0 393.0Q920 384 897 384H896H895Q872 384 845.0 393.0Q818 402 787.5 420.0Q757 438 735.5 452.5Q714 467 681.5 490.5Q649 514 639 521Q548 585 377.0 703.5Q206 822 172 846Q110 888 55.0 961.5Q0 1035 0 1098Q0 1176 41.5 1228.0Q83 1280 160 1280H1632Q1697 1280 1744.5 1233.0Q1792 1186 1792 1120Z"/></svg>
<div class="b" style="left:79px;top:897.94px;width:1578px;height:1px;background:#ededed;"></div>
<svg class="i" style="left:88px;top:910.94px" width="22" height="22" viewBox="0 0 22 22"><rect x="1.35" y="1.25" width="18.3" height="18.3" fill="#fff" stroke="#d6d6d6" stroke-width="2.5"/></svg>
<span class="t " style="left:133.12px;top:909.00px;font-size:14.53px;color:#555;letter-spacing:-0.137px;">Garage24 Demo</span>
<span class="t " style="left:260.18px;top:909.00px;font-size:14.53px;color:#555;letter-spacing:0.100px;">Hans Muster</span>
<span class="t " style="left:411.68px;top:909.00px;font-size:14.53px;color:#555;letter-spacing:0.344px;">Betreibung | 50</span>
<span class="t " style="left:596.83px;top:909.00px;font-size:14.53px;color:#555;letter-spacing:-0.125px;">50.00</span>
<span class="t " style="left:721.18px;top:909.00px;font-size:14.53px;color:#555;letter-spacing:0.292px;">116</span>
<span class="t " style="left:783.96px;top:909.00px;font-size:14.53px;color:#555;letter-spacing:-0.090px;">42.35 / 242.35</span>
<span class="t " style="left:920.73px;top:909.00px;font-size:14.53px;color:#555;letter-spacing:-0.175px;">09.04.2025</span>
<span class="t " style="left:1060.13px;top:909.00px;font-size:14.53px;color:#555;letter-spacing:-0.175px;">09.05.2025</span>
<span class="t " style="left:1204.88px;top:909.00px;font-size:14.53px;color:#555;letter-spacing:0.061px;">Nicht gesendet</span>
<div class="b" style="left:1436px;top:908.34px;width:143px;height:24px;border-radius:3px;background:#3a7bd5"></div>
<svg class="i" style="left:1444.20px;top:915.44px" width="10.29" height="10.29" viewBox="0 -1408 1536 1536"><path fill="#fff" transform="scale(1,-1)" d="M1511 480Q1511 475 1510 473Q1446 205 1242.0 38.5Q1038 -128 764 -128Q618 -128 481.5 -73.0Q345 -18 238 84L109 -45Q90 -64 64.0 -64.0Q38 -64 19.0 -45.0Q0 -26 0 0V448Q0 474 19.0 493.0Q38 512 64 512H512Q538 512 557.0 493.0Q576 474 576.0 448.0Q576 422 557 403L420 266Q491 200 581.0 164.0Q671 128 768 128Q902 128 1018.0 193.0Q1134 258 1204 372Q1215 389 1257 489Q1265 512 1287 512H1479Q1492 512 1501.5 502.5Q1511 493 1511 480ZM1536 1280V832Q1536 806 1517.0 787.0Q1498 768 1472 768H1024Q998 768 979.0 787.0Q960 806 960.0 832.0Q960 858 979 877L1117 1015Q969 1152 768 1152Q634 1152 518.0 1087.0Q402 1022 332 908Q321 891 279 791Q271 768 249 768H50Q37 768 27.5 777.5Q18 787 18 800V807Q83 1075 288.0 1241.5Q493 1408 768 1408Q914 1408 1052.0 1352.5Q1190 1297 1297 1196L1427 1325Q1446 1344 1472.0 1344.0Q1498 1344 1517.0 1325.0Q1536 1306 1536 1280Z"/></svg>
<span class="t " style="left:1459.84px;top:911.00px;font-size:11.65px;color:#fff;letter-spacing:0.333px;-webkit-text-stroke:0.45px #fff;">PDF neu generieren</span>
<div class="b" style="left:1584px;top:908.34px;width:27px;height:24px;border-radius:3px;background:#20a4d1"></div>
<svg class="i" style="left:1592.90px;top:914.34px" width="10.29" height="12.00" viewBox="0 -1536 1536 1792"><path fill="#fff" transform="scale(1,-1)" d="M1468 1156Q1496 1128 1516.0 1080.0Q1536 1032 1536 992V-160Q1536 -200 1508.0 -228.0Q1480 -256 1440 -256H96Q56 -256 28.0 -228.0Q0 -200 0 -160V1440Q0 1480 28.0 1508.0Q56 1536 96 1536H992Q1032 1536 1080.0 1516.0Q1128 1496 1156 1468ZM1024 1400V1024H1400Q1390 1053 1378 1065L1065 1378Q1053 1390 1024 1400ZM1408 -128V896H992Q952 896 924.0 924.0Q896 952 896 992V1408H128V-128ZM894 465Q927 439 978 409Q1037 416 1095 416Q1242 416 1272 367Q1288 345 1274 315Q1274 314 1273.0 313.0Q1272 312 1271 311V310Q1265 272 1200 272Q1152 272 1085.0 292.0Q1018 312 955 345Q734 321 563 262Q410 0 321 0Q306 0 293 7L269 19Q268 20 263 24Q253 34 257 60Q266 100 313.0 151.5Q360 203 445 248Q459 257 468 242Q470 240 470 238Q522 323 577 435Q645 571 681 697Q657 779 650.5 856.5Q644 934 657 984Q668 1024 699 1024H720H721Q744 1024 756 1009Q774 988 765 941Q763 935 761 933Q762 930 762 925V895Q760 772 748 703Q803 539 894 465ZM318 54Q370 78 455 212Q404 172 367.5 128.0Q331 84 318 54ZM716 974Q701 932 714 842Q715 849 721 886Q721 889 728 929Q729 933 732 937Q731 938 731 939Q730 941 730 942Q729 964 717 978Q717 977 716 976ZM592 313Q727 367 876 394Q874 395 863.0 403.5Q852 412 847 417Q771 484 720 593Q693 507 637 396Q607 340 592 313ZM1238 329Q1214 353 1098 353Q1174 325 1222 325Q1236 325 1240 326Q1240 327 1238 329Z"/></svg>
<div class="b" style="left:1614.8px;top:908.34px;width:28.2px;height:24px;border-radius:3px;background:#f8b44c"></div>
<svg class="i" style="left:1622.90px;top:915.74px" width="12.00" height="9.43" viewBox="0 -1280 1792 1408"><path fill="#fff" transform="scale(1,-1)" d="M1792 826V32Q1792 -34 1745.0 -81.0Q1698 -128 1632 -128H160Q94 -128 47.0 -81.0Q0 -34 0 32V826Q44 777 101 739Q463 493 598 394Q655 352 690.5 328.5Q726 305 785.0 280.5Q844 256 895 256H896H897Q948 256 1007.0 280.5Q1066 305 1101.5 328.5Q1137 352 1194 394Q1364 517 1692 739Q1749 778 1792 826ZM1792 1120Q1792 1041 1743.0 969.0Q1694 897 1621 846Q1245 585 1153 521Q1143 514 1110.5 490.5Q1078 467 1056.5 452.5Q1035 438 1004.5 420.0Q974 402 947.0 393.0Q920 384 897 384H896H895Q872 384 845.0 393.0Q818 402 787.5 420.0Q757 438 735.5 452.5Q714 467 681.5 490.5Q649 514 639 521Q548 585 377.0 703.5Q206 822 172 846Q110 888 55.0 961.5Q0 1035 0 1098Q0 1176 41.5 1228.0Q83 1280 160 1280H1632Q1697 1280 1744.5 1233.0Q1792 1186 1792 1120Z"/></svg>
<div class="b" style="left:1657px;top:111px;width:15px;height:806px;background:#e9e9e9;"></div>
<div class="b" style="left:1671px;top:889px;width:1px;height:28px;background:#9d9d9d;"></div>
<div class="b" style="left:60px;top:916px;width:1612px;height:39px;background:#f7f7f7;"></div>
<div class="b" style="left:60px;top:916px;width:1612px;height:1px;background:#dcdcdc;"></div>
<span class="t " style="left:75.23px;top:929.00px;font-size:13.49px;color:#a3a3a3;letter-spacing:-0.018px;">© 2025 </span>
<span class="t " style="left:122.09px;top:929.00px;font-size:13.0px;color:#a3a3a3;letter-spacing:0.284px;-webkit-text-stroke:0.45px #a3a3a3;">ALCOLM Business Software</span>
<span class="t " style="left:1473.77px;top:929.00px;font-size:13.49px;color:#a8a8a8;letter-spacing:-0.043px;">Freitag, 17. Oktober 2025</span>
<div class="b" style="left:1638px;top:925.8px;width:24.6px;height:24.8px;border-radius:3px;background:#e8e8e8"></div>
<svg class="i" style="left:1645.00px;top:934.20px" width="10.43" height="9.86" viewBox="53 -1344 1558 1472"><path fill="#999" transform="scale(1,-1)" d="M1611 565Q1611 514 1574 475L1499 400Q1461 362 1408 362Q1354 362 1318 400L1024 693V-11Q1024 -63 986.5 -95.5Q949 -128 896 -128H768Q715 -128 677.5 -95.5Q640 -63 640 -11V693L346 400Q310 362 256.0 362.0Q202 362 166 400L91 475Q53 513 53 565Q53 618 91 656L742 1307Q777 1344 832 1344Q886 1344 923 1307L1574 656Q1611 617 1611 565Z"/></svg>
<div class="b" style="left:1671px;top:917px;width:1px;height:38px;background:#c9c9c9;"></div>
<svg class="i" style="left:0;top:947px" width="4" height="8" viewBox="0 0 4 8"><path d="M0 1 Q0.6 6 3.4 8 L0 8 Z" fill="#14161b"/></svg>
</div></body></html>
